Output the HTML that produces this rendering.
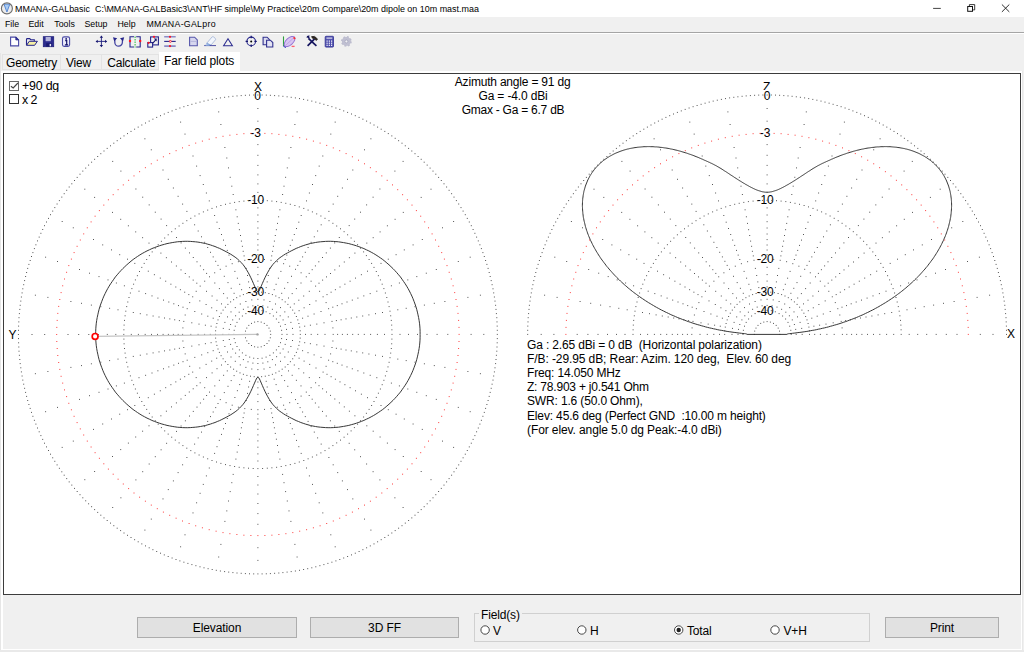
<!DOCTYPE html>
<html><head><meta charset="utf-8"><title>MMANA-GALbasic</title>
<style>
html,body{margin:0;padding:0}
body{width:1024px;height:652px;overflow:hidden;background:#f0f0f0;position:relative;font-family:"Liberation Sans",sans-serif;color:#000;font-size:12px}
.abs{position:absolute;white-space:nowrap}
#title{left:0;top:0;width:1024px;height:17px;background:#fff}
#ttext{left:15px;top:3.1px;font-size:8.95px;line-height:13px;color:#000}
#menu{left:0;top:17px;width:1024px;height:15px;background:#f0f0f0}
#menu span{position:absolute;top:1px;font-size:8.8px;line-height:13px}
#sep1{left:0;top:32px;width:1024px;height:1px;background:#a5a5a5}
#sep2{left:0;top:33px;width:1024px;height:1px;background:#fff}
.tab{top:54.5px;height:17px;font-size:12px;line-height:17px;color:#000;letter-spacing:-0.2px}
#panel{left:3px;top:73px;width:1016px;height:520px;background:#fff;border:1px solid #3c3c3c}
.pt{font-size:12px;line-height:14px;letter-spacing:-0.15px}
.lb{width:40px;text-align:center}
.btn{background:#e1e1e1;border:1px solid #adadad;box-sizing:border-box;text-align:center;font-size:12px;line-height:19px;padding-top:1px;height:21px;top:617px;letter-spacing:-0.1px}
svg{position:absolute;left:0;top:0}
.dk{stroke:#555;stroke-width:1;stroke-linecap:square;fill:none}
.dr{stroke:#ff3a3a;stroke-width:1;stroke-linecap:square;fill:none}
.cv{stroke:#2c2c2c;stroke-width:0.95;fill:none}
</style></head><body>
<div id="title" class="abs"></div>
<div id="ttext" class="abs">MMANA-GALbasic&nbsp; C:\MMANA-GALBasic3\ANT\HF simple\My Practice\20m Compare\20m dipole on 10m mast.maa</div>
<div id="menu" class="abs"><span style="left:5px">File</span><span style="left:28.5px">Edit</span><span style="left:54.3px">Tools</span><span style="left:84.5px">Setup</span><span style="left:117.5px">Help</span><span style="left:146.5px;letter-spacing:0.28px">MMANA-GALpro</span></div>
<div id="sep1" class="abs"></div><div id="sep2" class="abs"></div>

<!-- tabs -->
<div class="abs" style="left:0;top:53px;width:1px;height:599px;background:#e6e6e6"></div><div class="abs" style="left:0;top:650px;width:1024px;height:2px;background:#e9e9e9"></div><div class="abs" style="left:1022px;top:71px;width:1px;height:579px;background:#e8e8e8"></div>
<div class="abs" style="left:1px;top:71px;width:1021px;height:579px;box-sizing:border-box;border:solid #fff;border-width:2px 1px 1.5px 2px"></div>
<div class="abs" style="left:1.5px;top:53.5px;width:157.5px;height:16.5px;border:1px solid #e3e3e3;box-sizing:border-box"></div><div class="abs" style="left:60.3px;top:54px;width:1px;height:16px;background:#e3e3e3"></div><div class="abs" style="left:101px;top:54px;width:1px;height:16px;background:#e3e3e3"></div>
<div class="abs" style="left:158.8px;top:51.8px;width:80.8px;height:19.5px;background:#fff"></div>
<div class="abs tab" style="left:6px">Geometry</div>
<div class="abs tab" style="left:66px">View</div>
<div class="abs tab" style="left:107.2px">Calculate</div>
<div class="abs tab" style="left:164px;top:53.3px;letter-spacing:-0.12px">Far field plots</div>

<div id="panel" class="abs"></div>

<!-- plot labels -->
<div class="abs" style="left:9.1px;top:80.6px;width:8px;height:8.2px;border:0.8px solid #6a6a6a;background:#fff"></div>
<svg width="12" height="12" style="left:9px;top:80px" viewBox="0 0 12 12"><path d="M1.9 6.2L4.2 8L8.9 3" fill="none" stroke="#444" stroke-width="1.1"/></svg>
<div class="abs" style="left:9.1px;top:94.2px;width:8px;height:8.2px;border:0.8px solid #333;background:#fff"></div>
<div class="abs pt" style="left:22px;top:78.9px;height:13.3px;overflow:hidden;letter-spacing:-0.2px;font-size:12.4px">+90 dg</div>
<div class="abs pt" style="left:22px;top:92.6px;letter-spacing:-0.6px;font-size:12.4px">x 2</div>
<div class="abs pt" style="left:254px;top:80px">X</div>
<div class="abs pt" style="left:763px;top:80px">Z</div>
<div class="abs pt" style="left:8.4px;top:327.6px">Y</div>
<div class="abs pt" style="left:1007px;top:327.3px">X</div>
<div class="abs pt" style="left:412.6px;top:75px;width:200px;text-align:center;letter-spacing:-0.2px">Azimuth angle = 91 dg</div>
<div class="abs pt" style="left:413px;top:89px;width:200px;text-align:center">Ga = -4.0 dBi</div>
<div class="abs pt" style="left:413px;top:103.3px;width:200px;text-align:center;letter-spacing:-0.24px">Gmax - Ga = 6.7 dB</div>

<div class="abs pt" style="left:527px;top:337.6px">Ga : 2.65 dBi = 0 dB&nbsp; (Horizontal polarization)</div>
<div class="abs pt" style="left:527px;top:351.8px;letter-spacing:-0.09px">F/B: -29.95 dB; Rear: Azim. 120 deg,&nbsp; Elev. 60 deg</div>
<div class="abs pt" style="left:527px;top:366.0px">Freq: 14.050 MHz</div>
<div class="abs pt" style="left:527px;top:380.2px;letter-spacing:-0.21px">Z: 78.903 + j0.541 Ohm</div>
<div class="abs pt" style="left:527px;top:394.4px">SWR: 1.6 (50.0 Ohm),</div>
<div class="abs pt" style="left:527px;top:408.6px">Elev: 45.6 deg (Perfect GND&nbsp; :10.00 m height)</div>
<div class="abs pt" style="left:527px;top:422.8px;letter-spacing:-0.1px">(For elev. angle 5.0 dg Peak:-4.0 dBi)</div>

<div class="abs" style="left:252.5px;top:90.9px;width:11px;height:1.4px;background:#fff"></div><div class="abs" style="left:761.5px;top:90.3px;width:11px;height:2px;background:#fff"></div>
<div class="abs pt lb" style="left:237.5px;top:88.5px">0</div>
<div class="abs pt lb" style="left:235.5px;top:125.9px">-3</div>
<div class="abs pt lb" style="left:235.7px;top:192.7px">-10</div>
<div class="abs pt lb" style="left:235.7px;top:251.5px">-20</div>
<div class="abs pt lb" style="left:235.7px;top:285.0px">-30</div>
<div class="abs pt lb" style="left:235.7px;top:303.9px">-40</div>
<div class="abs pt lb" style="left:747.0px;top:88.5px">0</div>
<div class="abs pt lb" style="left:745.0px;top:125.9px">-3</div>
<div class="abs pt lb" style="left:745.2px;top:192.7px">-10</div>
<div class="abs pt lb" style="left:745.2px;top:251.5px">-20</div>
<div class="abs pt lb" style="left:745.2px;top:285.0px">-30</div>
<div class="abs pt lb" style="left:745.2px;top:303.9px">-40</div>
<svg width="1024" height="652" viewBox="0 0 1024 652">
<g fill="none" stroke-linejoin="miter">
<!-- title icon -->
<circle cx="6.9" cy="8.4" r="5.2" fill="#ececec"/>
<path d="M4 4.2h5.8L6.9 12z" fill="#a8ccf4" stroke="#5a8ad6" stroke-width="1"/>
<circle cx="6.9" cy="8.4" r="5.5" stroke="#6e6e6e" stroke-width="1.15"/>
<!-- window controls -->
<path d="M933.1 8.4h7.7" stroke="#222" stroke-width="0.85"/>
<path d="M969.4 6.1v-1.5h5.3v5.3h-1.6" stroke="#222" stroke-width="0.9"/>
<rect x="967.7" y="6.5" width="4.8" height="4.8" stroke="#111" stroke-width="1"/>
<path d="M1001.9 4.5l7.4 7.4M1009.3 4.5l-7.4 7.4" stroke="#222" stroke-width="0.95"/>
<!-- new -->
<path d="M10.6 37.1h5.2l2.8 2.8v6h-8z" fill="#fff" stroke="#4a4aa6" stroke-width="1.1"/>
<path d="M15.8 37.1v2.8h2.8z" fill="#3a3a96" stroke="#24248a" stroke-width="0.8"/>
<!-- open -->
<path d="M26.5 45.2v-5.8q0-.8.8-.8h2.4l1 1.1h3.6v1.6" stroke="#24248a" stroke-width="1.1"/>
<path d="M26.6 45.3l2.6-4h8.2l-2.8 4z" fill="#f6f0a4" stroke="#24248a" stroke-width="1"/>
<!-- save -->
<rect x="43.3" y="36.7" width="10.4" height="10" fill="#2c2c8e" stroke="#20207c" stroke-width="0.8"/>
<rect x="45.6" y="37" width="5.2" height="4.2" fill="#b4b4dc"/>
<rect x="46.2" y="43.2" width="5.6" height="3.5" fill="#1a1a70"/>
<rect x="49.6" y="43.9" width="1.5" height="2.4" fill="#e8e8f8"/>
<!-- info -->
<rect x="62.5" y="36.9" width="7.1" height="9.5" rx="1.6" fill="#ececfa" stroke="#4c4ca6" stroke-width="1.1"/>
<path d="M65.2 40.6h1.5v4M64.9 44.8h3.2" stroke="#14146a" stroke-width="1.2"/>
<circle cx="66.2" cy="38.9" r="0.9" fill="#14146a"/>
<!-- move -->
<path d="M96.6 41.4h9.6M101.4 36.6v9.6" stroke="#1c1c7c" stroke-width="0.9"/>
<path d="M101.4 35.6l1.7 2.1h-3.4zM101.4 47.2l1.7-2.1h-3.4zM95.6 41.4l2.1-1.7v3.4zM107.2 41.4l-2.1-1.7v3.4z" fill="#14146e"/>
<!-- rotate -->
<path d="M114.8 39.6v2.6a3.8 4 0 0 0 7.6 0v-2.6" stroke="#4444a2" stroke-width="1.3"/>
<path d="M113 37.2l4.2 1-3 3zM124.2 37.2l-4.2 1 3 3z" fill="#24248a"/>
<!-- brackets -->
<path d="M134 36.8h-4v10.2h4M136.2 36.8h4v10.2h-4" stroke="#24248a" stroke-width="1.1"/>
<path d="M135.1 36.4v11.2" stroke="#38c048" stroke-width="1.1" stroke-dasharray="1.6 0.9"/>
<circle cx="130" cy="41" r="1.2" fill="#ff1020"/><circle cx="140.2" cy="41" r="1.2" fill="#ff1020"/>
<!-- scale -->
<rect x="150.6" y="36.9" width="7.8" height="8" stroke="#24248a" stroke-width="1.1"/>
<rect x="147.8" y="42.6" width="4.8" height="4.5" fill="#f0f0f0" stroke="#24248a" stroke-width="1.1"/>
<path d="M152.6 43.3l3.2-3.4" stroke="#14146e" stroke-width="1.1"/>
<path d="M156.7 38.6v2.9l-2.9-2.9z" fill="#14146e"/>
<circle cx="154" cy="36.8" r="1.1" fill="#ff1020"/><circle cx="148.6" cy="42.8" r="1.1" fill="#ff1020"/>
<!-- lines -->
<path d="M164.2 36.8h11.5M164.2 46.1h11.5" stroke="#8a8ac6" stroke-width="1.6"/>
<path d="M164.2 41.4h11.5" stroke="#24248a" stroke-width="1.1"/>
<circle cx="170" cy="36.8" r="1.1" fill="#ff1020"/><circle cx="170" cy="46.1" r="1.1" fill="#ff1020"/>
<circle cx="170.3" cy="41.4" r="1" fill="#fff" stroke="#ff1020" stroke-width="0.8"/>
<!-- doc -->
<path d="M189.6 37.2h5l2.7 2.7v5.8h-7.7z" fill="#d6d6ee" stroke="#5656aa" stroke-width="1.1"/>
<path d="M190.5 41.4h5.8" stroke="#b0b0d8" stroke-width="0.9"/>
<!-- eraser -->
<path d="M206.6 43.4l5.4-6.4q.7-.7 1.5-.1l1.8 1.5q.7.7.1 1.5l-4.6 5.4z" fill="#f2f6fc" stroke="#a8b8d8" stroke-width="0.9"/><path d="M206.6 43.4l4.2 1.9" stroke="#88a8dc" stroke-width="1.2"/>
<path d="M204.2 45.6h11.8" stroke="#3a3a9a" stroke-width="0.9"/>
<path d="M205.6 45.2h4" stroke="#88a8dc" stroke-width="1.4"/>
<!-- triangle -->
<path d="M228 38.8l4.4 7h-8.8z" stroke="#2e2e90" stroke-width="1.05"/>
<!-- crosshair -->
<circle cx="251.2" cy="41.4" r="4.3" stroke="#24248a" stroke-width="1.1"/>
<path d="M251.2 35.8v2.4M251.2 44.6v2.4M245.6 41.4h2.4M254.4 41.4h2.4" stroke="#14146e" stroke-width="1.2"/>
<circle cx="251.2" cy="41.4" r="1" fill="#000"/>
<!-- copy -->
<path d="M263.1 37.2h4l2.2 2.2v5.4h-6.2z" fill="#dcdcf0" stroke="#30308e" stroke-width="1.1"/>
<path d="M266.6 40.2h3.8l2.4 2.4v4.4h-6.2z" fill="#e4e4f4" stroke="#30308e" stroke-width="1.1"/>
<!-- lobe -->
<path d="M283.5 36.4v9.6" stroke="#30a040" stroke-width="1.1"/>
<path d="M283.5 46l2.4 1.6" stroke="#3040c0" stroke-width="1.1"/>
<ellipse cx="289.6" cy="41.5" rx="6.6" ry="3.4" transform="rotate(-42 289.6 41.5)" fill="#d8c4f2" stroke="#9474d4" stroke-width="1"/>
<path d="M285.5 45.5l8-7.5" stroke="#b49ae0" stroke-width="0.7"/>
<path d="M293.6 37.4l1.5 1.5" stroke="#ff3030" stroke-width="1.6"/>
<path d="M291.6 46.4h3" stroke="#ff6070" stroke-width="1.3"/>
<!-- tools -->
<path d="M308.4 38.4l8 7.4" stroke="#14145e" stroke-width="1.7"/>
<path d="M307 37.6q.2-1.6 1.8-1.6l-.4 1.4 1.4.6" stroke="#14145e" stroke-width="1.2"/>
<path d="M307.6 45.8l7-7" stroke="#14145e" stroke-width="1.7"/>
<path d="M311.6 36.6q3-1.6 6 2.6l-1.6 1.2q-1.4-2.4-3.6-2.2z" fill="#2a2420" stroke="#2a2420" stroke-width="0.8"/>
<!-- calc -->
<rect x="325.2" y="36.3" width="8.3" height="10.8" rx="0.8" fill="#4c4cac" stroke="#3a3a98" stroke-width="0.9"/>
<rect x="326.4" y="37.3" width="5.9" height="1.8" fill="#b4b4dc"/>
<g fill="#fff"><rect x="326.5" y="40.5" width="1.2" height="1.2"/><rect x="328.75" y="40.5" width="1.2" height="1.2"/><rect x="331" y="40.5" width="1.2" height="1.2"/>
<rect x="326.5" y="42.6" width="1.2" height="1.2"/><rect x="328.75" y="42.6" width="1.2" height="1.2"/><rect x="331" y="42.6" width="1.2" height="1.2"/>
<rect x="326.5" y="44.7" width="1.2" height="1.2"/><rect x="328.75" y="44.7" width="1.2" height="1.2"/><rect x="331" y="44.7" width="1.2" height="1.2"/></g>
<!-- gear -->
<circle cx="346.4" cy="41.4" r="4.4" fill="#bcbcce" stroke="#bcbcce" stroke-width="2" stroke-dasharray="1.8 1.65"/>
<circle cx="346.4" cy="41.4" r="3.9" fill="#c0c0d2"/>
<circle cx="346.4" cy="41.4" r="1.5" fill="#f0f0f4" stroke="#a4a4bc" stroke-width="0.8"/>
<!-- radios -->
<circle cx="485.1" cy="630" r="4.2" fill="#fff" stroke="#333" stroke-width="0.9"/>
<circle cx="581.8" cy="630" r="4.2" fill="#fff" stroke="#333" stroke-width="0.9"/>
<circle cx="678.7" cy="630" r="4.2" fill="#fff" stroke="#333" stroke-width="0.9"/>
<circle cx="775.0" cy="630" r="4.2" fill="#fff" stroke="#333" stroke-width="0.9"/>
<circle cx="678.7" cy="630" r="2.2" fill="#222"/>
</g>
<path class="dk" d="M257.9 95.0h0M262.1 95.0h0M266.3 95.1h0M270.4 95.3h0M274.6 95.6h0M278.8 95.9h0M282.9 96.3h0M287.1 96.8h0M291.2 97.3h0M295.4 97.9h0M299.5 98.6h0M303.6 99.4h0M307.7 100.2h0M311.8 101.1h0M315.8 102.1h0M319.9 103.2h0M323.9 104.3h0M327.9 105.5h0M331.9 106.7h0M335.9 108.0h0M339.8 109.4h0M343.7 110.9h0M347.6 112.4h0M351.5 114.0h0M355.3 115.7h0M359.1 117.4h0M362.9 119.2h0M366.6 121.1h0M370.3 123.0h0M374.0 125.0h0M377.6 127.1h0M381.2 129.2h0M384.8 131.4h0M388.3 133.6h0M391.8 135.9h0M395.2 138.3h0M398.6 140.7h0M402.0 143.2h0M405.3 145.8h0M408.6 148.4h0M411.8 151.0h0M415.0 153.7h0M418.1 156.5h0M421.2 159.3h0M424.2 162.2h0M427.2 165.1h0M430.1 168.1h0M433.0 171.1h0M435.8 174.2h0M438.6 177.4h0M441.3 180.5h0M444.0 183.8h0M446.6 187.0h0M449.1 190.3h0M451.6 193.7h0M454.0 197.1h0M456.4 200.6h0M458.7 204.0h0M461.0 207.6h0M463.1 211.1h0M465.3 214.7h0M467.3 218.4h0M469.3 222.0h0M471.3 225.7h0M473.1 229.5h0M474.9 233.3h0M476.6 237.1h0M478.3 240.9h0M479.9 244.8h0M481.4 248.6h0M482.9 252.6h0M484.3 256.5h0M485.6 260.5h0M486.9 264.4h0M488.1 268.4h0M489.2 272.5h0M490.2 276.5h0M491.2 280.6h0M492.1 284.7h0M493.0 288.8h0M493.7 292.9h0M494.4 297.0h0M495.0 301.1h0M495.6 305.3h0M496.0 309.4h0M496.4 313.6h0M496.8 317.7h0M497.0 321.9h0M497.2 326.1h0M497.3 330.3h0M497.3 334.4h0M497.3 338.6h0M497.2 342.8h0M497.0 347.0h0M496.8 351.2h0M496.4 355.3h0M496.0 359.5h0M495.6 363.6h0M495.0 367.8h0M494.4 371.9h0M493.7 376.0h0M493.0 380.1h0M492.1 384.2h0M491.2 388.3h0M490.2 392.4h0M489.2 396.4h0M488.1 400.5h0M486.9 404.5h0M485.6 408.4h0M484.3 412.4h0M482.9 416.3h0M481.4 420.3h0M479.9 424.1h0M478.3 428.0h0M476.6 431.8h0M474.9 435.6h0M473.1 439.4h0M471.3 443.2h0M469.3 446.9h0M467.3 450.5h0M465.3 454.2h0M463.1 457.8h0M461.0 461.3h0M458.7 464.9h0M456.4 468.3h0M454.0 471.8h0M451.6 475.2h0M449.1 478.6h0M446.6 481.9h0M444.0 485.1h0M441.3 488.4h0M438.6 491.5h0M435.8 494.7h0M433.0 497.8h0M430.1 500.8h0M427.2 503.8h0M424.2 506.7h0M421.2 509.6h0M418.1 512.4h0M415.0 515.2h0M411.8 517.9h0M408.6 520.5h0M405.3 523.1h0M402.0 525.7h0M398.6 528.2h0M395.2 530.6h0M391.8 533.0h0M388.3 535.3h0M384.8 537.5h0M381.2 539.7h0M377.6 541.8h0M374.0 543.9h0M370.3 545.9h0M366.6 547.8h0M362.9 549.7h0M359.1 551.5h0M355.3 553.2h0M351.5 554.9h0M347.6 556.5h0M343.7 558.0h0M339.8 559.5h0M335.9 560.9h0M331.9 562.2h0M327.9 563.4h0M323.9 564.6h0M319.9 565.7h0M315.8 566.8h0M311.8 567.8h0M307.7 568.7h0M303.6 569.5h0M299.5 570.3h0M295.4 571.0h0M291.2 571.6h0M287.1 572.1h0M282.9 572.6h0M278.8 573.0h0M274.6 573.3h0M270.4 573.6h0M266.3 573.8h0M262.1 573.9h0M257.9 573.9h0M253.7 573.9h0M249.5 573.8h0M245.4 573.6h0M241.2 573.3h0M237.0 573.0h0M232.9 572.6h0M228.7 572.1h0M224.6 571.6h0M220.4 571.0h0M216.3 570.3h0M212.2 569.5h0M208.1 568.7h0M204.0 567.8h0M200.0 566.8h0M195.9 565.7h0M191.9 564.6h0M187.9 563.4h0M183.9 562.2h0M179.9 560.9h0M176.0 559.5h0M172.1 558.0h0M168.2 556.5h0M164.3 554.9h0M160.5 553.2h0M156.7 551.5h0M152.9 549.7h0M149.2 547.8h0M145.5 545.9h0M141.8 543.9h0M138.2 541.8h0M134.6 539.7h0M131.0 537.5h0M127.5 535.3h0M124.0 533.0h0M120.6 530.6h0M117.2 528.2h0M113.8 525.7h0M110.5 523.1h0M107.2 520.5h0M104.0 517.9h0M100.8 515.2h0M97.7 512.4h0M94.6 509.6h0M91.6 506.7h0M88.6 503.8h0M85.7 500.8h0M82.8 497.8h0M80.0 494.7h0M77.2 491.5h0M74.5 488.4h0M71.8 485.1h0M69.2 481.9h0M66.7 478.6h0M64.2 475.2h0M61.8 471.8h0M59.4 468.3h0M57.1 464.9h0M54.8 461.3h0M52.7 457.8h0M50.5 454.2h0M48.5 450.5h0M46.5 446.9h0M44.5 443.2h0M42.7 439.4h0M40.9 435.6h0M39.2 431.8h0M37.5 428.0h0M35.9 424.1h0M34.4 420.3h0M32.9 416.3h0M31.5 412.4h0M30.2 408.4h0M28.9 404.5h0M27.7 400.5h0M26.6 396.4h0M25.6 392.4h0M24.6 388.3h0M23.7 384.2h0M22.8 380.1h0M22.1 376.0h0M21.4 371.9h0M20.8 367.8h0M20.2 363.6h0M19.8 359.5h0M19.4 355.3h0M19.0 351.2h0M18.8 347.0h0M18.6 342.8h0M18.5 338.6h0M18.4 334.5h0M18.5 330.3h0M18.6 326.1h0M18.8 321.9h0M19.0 317.7h0M19.4 313.6h0M19.8 309.4h0M20.2 305.3h0M20.8 301.1h0M21.4 297.0h0M22.1 292.9h0M22.8 288.8h0M23.7 284.7h0M24.6 280.6h0M25.6 276.5h0M26.6 272.5h0M27.7 268.4h0M28.9 264.4h0M30.2 260.5h0M31.5 256.5h0M32.9 252.6h0M34.4 248.6h0M35.9 244.8h0M37.5 240.9h0M39.2 237.1h0M40.9 233.3h0M42.7 229.5h0M44.5 225.7h0M46.5 222.0h0M48.5 218.4h0M50.5 214.7h0M52.7 211.1h0M54.8 207.6h0M57.1 204.0h0M59.4 200.6h0M61.8 197.1h0M64.2 193.7h0M66.7 190.3h0M69.2 187.0h0M71.8 183.8h0M74.5 180.5h0M77.2 177.4h0M80.0 174.2h0M82.8 171.1h0M85.7 168.1h0M88.6 165.1h0M91.6 162.2h0M94.6 159.3h0M97.7 156.5h0M100.8 153.7h0M104.0 151.0h0M107.2 148.4h0M110.5 145.8h0M113.8 143.2h0M117.2 140.7h0M120.6 138.3h0M124.0 135.9h0M127.5 133.6h0M131.0 131.4h0M134.6 129.2h0M138.2 127.1h0M141.8 125.0h0M145.5 123.0h0M149.2 121.1h0M152.9 119.2h0M156.7 117.4h0M160.5 115.7h0M164.3 114.0h0M168.2 112.4h0M172.1 110.9h0M176.0 109.4h0M179.9 108.0h0M183.9 106.7h0M187.9 105.5h0M191.9 104.3h0M195.9 103.2h0M200.0 102.1h0M204.0 101.1h0M208.1 100.2h0M212.2 99.4h0M216.3 98.6h0M220.4 97.9h0M224.6 97.3h0M228.7 96.8h0M232.9 96.3h0M237.0 95.9h0M241.2 95.6h0M245.4 95.3h0M249.5 95.1h0M253.7 95.0h0M257.9 200.3h0M262.6 200.4h0M267.3 200.7h0M271.9 201.1h0M276.6 201.6h0M281.2 202.4h0M285.8 203.3h0M290.3 204.3h0M294.9 205.5h0M299.3 206.9h0M303.8 208.4h0M308.1 210.1h0M312.4 211.9h0M316.7 213.9h0M320.9 216.0h0M325.0 218.3h0M329.0 220.7h0M332.9 223.3h0M336.7 226.0h0M340.5 228.8h0M344.1 231.7h0M347.6 234.8h0M351.1 238.0h0M354.4 241.3h0M357.6 244.7h0M360.6 248.2h0M363.6 251.9h0M366.4 255.6h0M369.1 259.5h0M371.6 263.4h0M374.0 267.4h0M376.3 271.5h0M378.4 275.7h0M380.4 279.9h0M382.2 284.2h0M383.9 288.6h0M385.4 293.0h0M386.8 297.5h0M388.0 302.0h0M389.1 306.6h0M390.0 311.2h0M390.7 315.8h0M391.3 320.4h0M391.7 325.1h0M391.9 329.8h0M392.0 334.4h0M391.9 339.1h0M391.7 343.8h0M391.3 348.5h0M390.7 353.1h0M390.0 357.7h0M389.1 362.3h0M388.0 366.9h0M386.8 371.4h0M385.4 375.9h0M383.9 380.3h0M382.2 384.7h0M380.4 389.0h0M378.4 393.2h0M376.3 397.4h0M374.0 401.5h0M371.6 405.5h0M369.1 409.4h0M366.4 413.3h0M363.6 417.0h0M360.6 420.7h0M357.6 424.2h0M354.4 427.6h0M351.1 430.9h0M347.6 434.1h0M344.1 437.2h0M340.5 440.1h0M336.7 442.9h0M332.9 445.6h0M329.0 448.2h0M325.0 450.6h0M320.9 452.9h0M316.7 455.0h0M312.4 457.0h0M308.1 458.8h0M303.8 460.5h0M299.3 462.0h0M294.9 463.4h0M290.3 464.6h0M285.8 465.6h0M281.2 466.5h0M276.6 467.3h0M271.9 467.8h0M267.3 468.2h0M262.6 468.5h0M257.9 468.6h0M253.2 468.5h0M248.5 468.2h0M243.9 467.8h0M239.2 467.3h0M234.6 466.5h0M230.0 465.6h0M225.5 464.6h0M220.9 463.4h0M216.5 462.0h0M212.0 460.5h0M207.7 458.8h0M203.4 457.0h0M199.1 455.0h0M194.9 452.9h0M190.8 450.6h0M186.8 448.2h0M182.9 445.6h0M179.1 442.9h0M175.3 440.1h0M171.7 437.2h0M168.2 434.1h0M164.7 430.9h0M161.4 427.6h0M158.2 424.2h0M155.2 420.7h0M152.2 417.0h0M149.4 413.3h0M146.7 409.4h0M144.2 405.5h0M141.8 401.5h0M139.5 397.4h0M137.4 393.2h0M135.4 389.0h0M133.6 384.7h0M131.9 380.3h0M130.4 375.9h0M129.0 371.4h0M127.8 366.9h0M126.7 362.3h0M125.8 357.7h0M125.1 353.1h0M124.5 348.5h0M124.1 343.8h0M123.9 339.1h0M123.8 334.4h0M123.9 329.8h0M124.1 325.1h0M124.5 320.4h0M125.1 315.8h0M125.8 311.2h0M126.7 306.6h0M127.8 302.0h0M129.0 297.5h0M130.4 293.0h0M131.9 288.6h0M133.6 284.2h0M135.4 279.9h0M137.4 275.7h0M139.5 271.5h0M141.8 267.4h0M144.2 263.4h0M146.7 259.5h0M149.4 255.6h0M152.2 251.9h0M155.2 248.2h0M158.2 244.7h0M161.4 241.3h0M164.7 238.0h0M168.2 234.8h0M171.7 231.7h0M175.3 228.8h0M179.1 226.0h0M182.9 223.3h0M186.8 220.7h0M190.8 218.3h0M194.9 216.0h0M199.1 213.9h0M203.4 211.9h0M207.7 210.1h0M212.0 208.4h0M216.5 206.9h0M220.9 205.5h0M225.5 204.3h0M230.0 203.3h0M234.6 202.4h0M239.2 201.6h0M243.9 201.1h0M248.5 200.7h0M253.2 200.4h0M257.9 259.2h0M264.5 259.5h0M271.0 260.3h0M277.4 261.7h0M283.6 263.7h0M289.7 266.2h0M295.5 269.3h0M301.1 272.8h0M306.3 276.8h0M311.1 281.2h0M315.6 286.1h0M319.6 291.3h0M323.1 296.8h0M326.1 302.6h0M328.6 308.7h0M330.6 315.0h0M332.0 321.4h0M332.9 327.9h0M333.2 334.4h0M332.9 341.0h0M332.0 347.5h0M330.6 353.9h0M328.6 360.2h0M326.1 366.3h0M323.1 372.1h0M319.6 377.6h0M315.6 382.8h0M311.1 387.7h0M306.3 392.1h0M301.1 396.1h0M295.5 399.6h0M289.7 402.7h0M283.6 405.2h0M277.4 407.2h0M271.0 408.6h0M264.5 409.4h0M257.9 409.7h0M251.3 409.4h0M244.8 408.6h0M238.4 407.2h0M232.2 405.2h0M226.1 402.7h0M220.3 399.6h0M214.7 396.1h0M209.5 392.1h0M204.7 387.7h0M200.2 382.8h0M196.2 377.6h0M192.7 372.1h0M189.7 366.3h0M187.2 360.2h0M185.2 353.9h0M183.8 347.5h0M182.9 341.0h0M182.6 334.4h0M182.9 327.9h0M183.8 321.4h0M185.2 315.0h0M187.2 308.7h0M189.7 302.6h0M192.7 296.8h0M196.2 291.3h0M200.2 286.1h0M204.7 281.2h0M209.5 276.8h0M214.7 272.8h0M220.3 269.3h0M226.1 266.2h0M232.2 263.7h0M238.4 261.7h0M244.8 260.3h0M251.3 259.5h0M257.9 292.0h0M261.6 292.2h0M265.3 292.7h0M268.9 293.5h0M272.4 294.6h0M275.8 296.0h0M279.1 297.7h0M282.2 299.7h0M285.2 301.9h0M287.9 304.4h0M290.4 307.2h0M292.7 310.1h0M294.7 313.2h0M296.4 316.5h0M297.8 319.9h0M298.9 323.5h0M299.7 327.1h0M300.2 330.8h0M300.3 334.4h0M300.2 338.1h0M299.7 341.8h0M298.9 345.4h0M297.8 349.0h0M296.4 352.4h0M294.7 355.7h0M292.7 358.8h0M290.4 361.7h0M287.9 364.5h0M285.2 367.0h0M282.2 369.2h0M279.1 371.2h0M275.8 372.9h0M272.4 374.3h0M268.9 375.4h0M265.3 376.2h0M261.6 376.7h0M257.9 376.9h0M254.2 376.7h0M250.5 376.2h0M246.9 375.4h0M243.4 374.3h0M240.0 372.9h0M236.7 371.2h0M233.6 369.2h0M230.6 367.0h0M227.9 364.5h0M225.4 361.7h0M223.1 358.8h0M221.1 355.7h0M219.4 352.4h0M218.0 349.0h0M216.9 345.4h0M216.1 341.8h0M215.6 338.1h0M215.5 334.4h0M215.6 330.8h0M216.1 327.1h0M216.9 323.5h0M218.0 319.9h0M219.4 316.5h0M221.1 313.2h0M223.1 310.1h0M225.4 307.2h0M227.9 304.4h0M230.6 301.9h0M233.6 299.7h0M236.7 297.7h0M240.0 296.0h0M243.4 294.6h0M246.9 293.5h0M250.5 292.7h0M254.2 292.2h0M257.9 310.4h0M262.1 310.7h0M266.1 311.8h0M269.9 313.6h0M273.4 316.0h0M276.4 319.0h0M278.8 322.4h0M280.5 326.2h0M281.6 330.3h0M282.0 334.4h0M281.6 338.6h0M280.5 342.7h0M278.8 346.5h0M276.4 349.9h0M273.4 352.9h0M269.9 355.3h0M266.1 357.1h0M262.1 358.2h0M257.9 358.5h0M253.7 358.2h0M249.7 357.1h0M245.9 355.3h0M242.4 352.9h0M239.4 349.9h0M237.0 346.5h0M235.3 342.7h0M234.2 338.6h0M233.8 334.4h0M234.2 330.3h0M235.3 326.2h0M237.0 322.4h0M239.4 319.0h0M242.4 316.0h0M245.9 313.6h0M249.7 311.8h0M253.7 310.7h0M257.9 321.6h0M261.2 322.1h0M264.3 323.4h0M267.0 325.4h0M269.0 328.1h0M270.3 331.1h0M270.7 334.4h0M270.3 337.8h0M269.0 340.8h0M267.0 343.5h0M264.3 345.5h0M261.2 346.8h0M257.9 347.2h0M254.6 346.8h0M251.5 345.5h0M248.8 343.5h0M246.8 340.9h0M245.5 337.8h0M245.1 334.4h0M245.5 331.1h0M246.8 328.1h0M248.8 325.4h0M251.5 323.4h0M254.6 322.1h0M257.9 108.5h0M257.9 121.2h0M257.9 144.6h0M257.9 155.3h0M257.9 165.4h0M257.9 174.9h0M257.9 183.9h0M257.9 192.4h0M257.9 207.9h0M257.9 215.0h0M257.9 221.7h0M257.9 228.0h0M257.9 234.0h0M257.9 239.6h0M257.9 245.0h0M257.9 250.0h0M257.9 254.7h0M257.9 267.3h0M257.9 274.6h0M257.9 281.1h0M257.9 286.9h0M257.9 299.3h0M257.9 305.4h0M297.1 111.9h0M294.9 124.5h0M290.9 147.5h0M289.0 158.0h0M287.3 167.9h0M285.6 177.3h0M284.0 186.2h0M282.6 194.5h0M279.9 209.8h0M278.6 216.8h0M277.5 223.4h0M276.4 229.7h0M275.3 235.5h0M274.4 241.1h0M273.4 246.3h0M272.6 251.3h0M271.7 255.9h0M269.6 268.4h0M268.3 275.5h0M267.2 281.9h0M266.2 287.6h0M264.0 299.9h0M262.9 305.8h0M335.2 122.1h0M330.8 134.1h0M322.8 156.0h0M319.2 166.1h0M315.7 175.6h0M312.5 184.5h0M309.4 193.0h0M306.5 200.9h0M301.2 215.5h0M298.8 222.2h0M296.5 228.5h0M294.3 234.5h0M292.3 240.1h0M290.3 245.4h0M288.5 250.4h0M286.8 255.1h0M285.2 259.5h0M280.9 271.4h0M278.4 278.2h0M276.1 284.3h0M274.2 289.7h0M269.9 301.5h0M267.8 307.1h0M370.9 138.8h0M364.5 149.8h0M352.8 170.0h0M347.5 179.3h0M342.4 188.0h0M337.7 196.3h0M333.2 204.1h0M328.9 211.4h0M321.2 224.8h0M317.6 231.0h0M314.3 236.8h0M311.1 242.3h0M308.1 247.5h0M305.3 252.3h0M302.6 256.9h0M300.1 261.3h0M297.8 265.4h0M291.5 276.3h0M287.8 282.6h0M284.6 288.3h0M281.7 293.3h0M275.5 304.0h0M272.4 309.3h0M403.1 161.4h0M394.9 171.1h0M379.9 189.0h0M373.1 197.2h0M366.6 204.9h0M360.5 212.2h0M354.7 219.1h0M349.2 225.6h0M339.3 237.5h0M334.7 242.9h0M330.4 248.1h0M326.3 252.9h0M322.5 257.5h0M318.8 261.8h0M315.4 265.9h0M312.2 269.7h0M309.2 273.4h0M301.0 283.0h0M296.4 288.6h0M292.2 293.6h0M288.5 298.0h0M280.5 307.6h0M276.6 312.2h0M431.0 189.2h0M421.2 197.4h0M403.3 212.4h0M395.1 219.3h0M387.4 225.8h0M380.1 231.9h0M373.2 237.7h0M366.8 243.1h0M354.9 253.1h0M349.4 257.7h0M344.3 262.0h0M339.4 266.0h0M334.8 269.9h0M330.5 273.5h0M326.5 276.9h0M322.6 280.1h0M319.0 283.2h0M309.3 291.3h0M303.7 296.0h0M298.8 300.2h0M294.3 303.9h0M284.8 311.9h0M280.2 315.8h0M453.6 221.5h0M442.5 227.8h0M422.3 239.5h0M413.1 244.9h0M404.3 249.9h0M396.1 254.7h0M388.3 259.2h0M381.0 263.4h0M367.5 271.2h0M361.4 274.7h0M355.5 278.1h0M350.1 281.2h0M344.9 284.2h0M340.0 287.0h0M335.4 289.7h0M331.1 292.2h0M327.0 294.6h0M316.0 300.9h0M309.7 304.5h0M304.1 307.8h0M299.1 310.7h0M288.3 316.9h0M283.1 319.9h0M470.2 257.2h0M458.3 261.5h0M436.3 269.5h0M426.3 273.2h0M416.8 276.6h0M407.8 279.9h0M399.4 283.0h0M391.4 285.8h0M376.8 291.2h0M370.2 293.6h0M363.8 295.9h0M357.9 298.1h0M352.3 300.1h0M347.0 302.0h0M342.0 303.8h0M337.3 305.6h0M332.8 307.2h0M321.0 311.5h0M314.1 314.0h0M308.0 316.2h0M302.6 318.2h0M290.9 322.4h0M285.2 324.5h0M480.4 295.2h0M467.9 297.4h0M444.9 301.5h0M434.3 303.3h0M424.4 305.1h0M415.0 306.7h0M406.2 308.3h0M397.8 309.8h0M382.5 312.5h0M375.5 313.7h0M368.9 314.9h0M362.7 316.0h0M356.8 317.0h0M351.3 318.0h0M346.0 318.9h0M341.1 319.8h0M336.4 320.6h0M324.0 322.8h0M316.8 324.1h0M310.4 325.2h0M304.7 326.2h0M292.5 328.4h0M286.5 329.4h0M483.8 334.4h0M471.1 334.4h0M447.8 334.4h0M437.1 334.4h0M427.0 334.4h0M417.5 334.4h0M408.5 334.4h0M400.0 334.4h0M384.5 334.4h0M377.4 334.4h0M370.6 334.4h0M364.3 334.4h0M358.3 334.4h0M352.7 334.4h0M347.4 334.4h0M342.4 334.4h0M337.6 334.4h0M325.0 334.4h0M317.7 334.4h0M311.2 334.4h0M305.5 334.4h0M293.0 334.4h0M287.0 334.4h0M480.4 373.7h0M467.9 371.5h0M444.9 367.4h0M434.3 365.6h0M424.4 363.8h0M415.0 362.2h0M406.2 360.6h0M397.8 359.1h0M382.5 356.4h0M375.5 355.2h0M368.9 354.0h0M362.7 352.9h0M356.8 351.9h0M351.3 350.9h0M346.0 350.0h0M341.1 349.1h0M336.4 348.3h0M324.0 346.1h0M316.8 344.8h0M310.4 343.7h0M304.7 342.7h0M292.5 340.5h0M286.5 339.5h0M470.2 411.7h0M458.3 407.4h0M436.3 399.4h0M426.3 395.7h0M416.8 392.3h0M407.8 389.0h0M399.4 385.9h0M391.4 383.1h0M376.8 377.7h0M370.2 375.3h0M363.8 373.0h0M357.9 370.8h0M352.3 368.8h0M347.0 366.9h0M342.0 365.1h0M337.3 363.3h0M332.8 361.7h0M321.0 357.4h0M314.1 354.9h0M308.0 352.7h0M302.6 350.7h0M290.9 346.5h0M285.2 344.4h0M453.6 447.4h0M442.5 441.1h0M422.3 429.4h0M413.1 424.0h0M404.3 419.0h0M396.1 414.2h0M388.3 409.7h0M381.0 405.5h0M367.5 397.7h0M361.4 394.2h0M355.5 390.8h0M350.1 387.7h0M344.9 384.7h0M340.0 381.9h0M335.4 379.2h0M331.1 376.7h0M327.0 374.3h0M316.0 368.0h0M309.7 364.4h0M304.1 361.1h0M299.1 358.2h0M288.3 352.0h0M283.1 349.0h0M431.0 479.7h0M421.2 471.5h0M403.3 456.5h0M395.1 449.6h0M387.4 443.1h0M380.1 437.0h0M373.2 431.2h0M366.8 425.8h0M354.9 415.8h0M349.4 411.2h0M344.3 406.9h0M339.4 402.9h0M334.8 399.0h0M330.5 395.4h0M326.5 392.0h0M322.6 388.8h0M319.0 385.7h0M309.3 377.6h0M303.7 372.9h0M298.8 368.7h0M294.3 365.0h0M284.8 357.0h0M280.2 353.1h0M403.1 507.5h0M394.9 497.8h0M379.9 479.9h0M373.1 471.7h0M366.6 464.0h0M360.5 456.7h0M354.7 449.8h0M349.2 443.3h0M339.3 431.4h0M334.7 426.0h0M330.4 420.8h0M326.3 416.0h0M322.5 411.4h0M318.8 407.1h0M315.4 403.0h0M312.2 399.2h0M309.2 395.5h0M301.0 385.9h0M296.4 380.3h0M292.2 375.3h0M288.5 370.9h0M280.5 361.3h0M276.6 356.7h0M370.9 530.1h0M364.5 519.1h0M352.8 498.9h0M347.5 489.6h0M342.4 480.9h0M337.7 472.6h0M333.2 464.8h0M328.9 457.5h0M321.2 444.1h0M317.6 437.9h0M314.3 432.1h0M311.1 426.6h0M308.1 421.4h0M305.3 416.6h0M302.6 412.0h0M300.1 407.6h0M297.8 403.5h0M291.5 392.6h0M287.8 386.3h0M284.6 380.6h0M281.7 375.6h0M275.5 364.9h0M272.4 359.6h0M335.2 546.8h0M330.8 534.8h0M322.8 512.9h0M319.2 502.8h0M315.7 493.3h0M312.5 484.4h0M309.4 475.9h0M306.5 468.0h0M301.2 453.4h0M298.8 446.7h0M296.5 440.4h0M294.3 434.4h0M292.3 428.8h0M290.3 423.5h0M288.5 418.5h0M286.8 413.8h0M285.2 409.4h0M280.9 397.5h0M278.4 390.7h0M276.1 384.6h0M274.2 379.2h0M269.9 367.4h0M267.8 361.8h0M297.1 557.0h0M294.9 544.4h0M290.9 521.4h0M289.0 510.9h0M287.3 501.0h0M285.6 491.6h0M284.0 482.7h0M282.6 474.4h0M279.9 459.1h0M278.6 452.1h0M277.5 445.5h0M276.4 439.2h0M275.3 433.4h0M274.4 427.8h0M273.4 422.6h0M272.6 417.6h0M271.7 413.0h0M269.6 400.5h0M268.3 393.4h0M267.2 387.0h0M266.2 381.3h0M264.0 369.0h0M262.9 363.1h0M257.9 560.4h0M257.9 547.7h0M257.9 524.3h0M257.9 513.6h0M257.9 503.5h0M257.9 494.0h0M257.9 485.0h0M257.9 476.5h0M257.9 461.0h0M257.9 453.9h0M257.9 447.2h0M257.9 440.9h0M257.9 434.9h0M257.9 429.3h0M257.9 423.9h0M257.9 418.9h0M257.9 414.2h0M257.9 401.6h0M257.9 394.3h0M257.9 387.8h0M257.9 382.0h0M257.9 369.6h0M257.9 363.5h0M218.7 557.0h0M220.9 544.4h0M224.9 521.4h0M226.8 510.9h0M228.5 501.0h0M230.2 491.6h0M231.8 482.7h0M233.2 474.4h0M235.9 459.1h0M237.2 452.1h0M238.3 445.5h0M239.4 439.2h0M240.5 433.4h0M241.4 427.8h0M242.4 422.6h0M243.2 417.6h0M244.1 413.0h0M246.2 400.5h0M247.5 393.4h0M248.6 387.0h0M249.6 381.3h0M251.8 369.0h0M252.9 363.1h0M180.6 546.8h0M185.0 534.8h0M193.0 512.9h0M196.6 502.8h0M200.1 493.3h0M203.3 484.4h0M206.4 475.9h0M209.3 468.0h0M214.6 453.4h0M217.0 446.7h0M219.3 440.4h0M221.5 434.4h0M223.5 428.8h0M225.5 423.5h0M227.3 418.5h0M229.0 413.8h0M230.6 409.4h0M234.9 397.5h0M237.4 390.7h0M239.7 384.6h0M241.6 379.2h0M245.9 367.4h0M248.0 361.8h0M144.9 530.1h0M151.3 519.1h0M163.0 498.9h0M168.3 489.6h0M173.4 480.9h0M178.1 472.6h0M182.6 464.8h0M186.9 457.5h0M194.6 444.1h0M198.2 437.9h0M201.5 432.1h0M204.7 426.6h0M207.7 421.4h0M210.5 416.6h0M213.2 412.0h0M215.7 407.6h0M218.0 403.5h0M224.3 392.6h0M228.0 386.3h0M231.2 380.6h0M234.1 375.6h0M240.3 364.9h0M243.4 359.6h0M112.7 507.5h0M120.9 497.8h0M135.9 479.9h0M142.7 471.7h0M149.2 464.0h0M155.3 456.7h0M161.1 449.8h0M166.6 443.3h0M176.5 431.4h0M181.1 426.0h0M185.4 420.8h0M189.5 416.0h0M193.3 411.4h0M197.0 407.1h0M200.4 403.0h0M203.6 399.2h0M206.6 395.5h0M214.8 385.9h0M219.4 380.3h0M223.6 375.3h0M227.3 370.9h0M235.3 361.3h0M239.2 356.7h0M84.8 479.7h0M94.6 471.5h0M112.5 456.5h0M120.7 449.6h0M128.4 443.1h0M135.7 437.0h0M142.6 431.2h0M149.0 425.8h0M160.9 415.8h0M166.4 411.2h0M171.5 406.9h0M176.4 402.9h0M181.0 399.0h0M185.3 395.4h0M189.3 392.0h0M193.2 388.8h0M196.8 385.7h0M206.5 377.6h0M212.1 372.9h0M217.0 368.7h0M221.5 365.0h0M231.0 357.0h0M235.6 353.1h0M62.2 447.4h0M73.3 441.1h0M93.5 429.4h0M102.7 424.0h0M111.5 419.0h0M119.7 414.2h0M127.5 409.7h0M134.8 405.5h0M148.3 397.7h0M154.4 394.2h0M160.3 390.8h0M165.7 387.7h0M170.9 384.7h0M175.8 381.9h0M180.4 379.2h0M184.7 376.7h0M188.8 374.3h0M199.8 368.0h0M206.1 364.4h0M211.7 361.1h0M216.7 358.2h0M227.5 352.0h0M232.7 349.0h0M45.6 411.7h0M57.5 407.4h0M79.5 399.4h0M89.5 395.7h0M99.0 392.3h0M108.0 389.0h0M116.4 385.9h0M124.4 383.1h0M139.0 377.7h0M145.6 375.3h0M152.0 373.0h0M157.9 370.8h0M163.5 368.8h0M168.8 366.9h0M173.8 365.1h0M178.5 363.3h0M183.0 361.7h0M194.8 357.4h0M201.7 354.9h0M207.8 352.7h0M213.2 350.7h0M224.9 346.5h0M230.6 344.4h0M35.4 373.7h0M47.9 371.5h0M70.9 367.4h0M81.5 365.6h0M91.4 363.8h0M100.8 362.2h0M109.6 360.6h0M118.0 359.1h0M133.3 356.4h0M140.3 355.2h0M146.9 354.0h0M153.1 352.9h0M159.0 351.9h0M164.5 350.9h0M169.8 350.0h0M174.7 349.1h0M179.4 348.3h0M191.8 346.1h0M199.0 344.8h0M205.4 343.7h0M211.1 342.7h0M223.3 340.5h0M229.3 339.5h0M32.0 334.5h0M44.7 334.5h0M68.0 334.5h0M78.7 334.5h0M88.8 334.5h0M98.3 334.5h0M107.3 334.4h0M115.8 334.4h0M131.3 334.4h0M138.4 334.4h0M145.2 334.4h0M151.5 334.4h0M157.5 334.4h0M163.1 334.4h0M168.4 334.4h0M173.4 334.4h0M178.2 334.4h0M190.8 334.4h0M198.1 334.4h0M204.6 334.4h0M210.3 334.4h0M222.8 334.4h0M228.8 334.4h0M35.4 295.2h0M47.9 297.4h0M70.9 301.5h0M81.5 303.3h0M91.4 305.1h0M100.8 306.7h0M109.6 308.3h0M118.0 309.8h0M133.3 312.5h0M140.3 313.7h0M146.9 314.9h0M153.1 316.0h0M159.0 317.0h0M164.5 318.0h0M169.8 318.9h0M174.7 319.8h0M179.4 320.6h0M191.8 322.8h0M199.0 324.1h0M205.4 325.2h0M211.1 326.2h0M223.3 328.4h0M229.3 329.4h0M45.6 257.2h0M57.5 261.5h0M79.5 269.5h0M89.5 273.2h0M99.0 276.6h0M108.0 279.9h0M116.4 283.0h0M124.4 285.8h0M139.0 291.2h0M145.6 293.6h0M152.0 295.9h0M157.9 298.1h0M163.5 300.1h0M168.8 302.0h0M173.8 303.8h0M178.5 305.6h0M183.0 307.2h0M194.8 311.5h0M201.7 314.0h0M207.8 316.2h0M213.2 318.2h0M224.9 322.4h0M230.6 324.5h0M62.2 221.5h0M73.3 227.8h0M93.5 239.5h0M102.7 244.9h0M111.5 249.9h0M119.7 254.7h0M127.5 259.2h0M134.8 263.4h0M148.3 271.2h0M154.4 274.7h0M160.3 278.1h0M165.7 281.2h0M170.9 284.2h0M175.8 287.0h0M180.4 289.7h0M184.7 292.2h0M188.8 294.6h0M199.8 300.9h0M206.1 304.5h0M211.7 307.8h0M216.7 310.7h0M227.5 316.9h0M232.7 319.9h0M84.8 189.2h0M94.6 197.4h0M112.5 212.4h0M120.7 219.3h0M128.4 225.8h0M135.7 231.9h0M142.6 237.7h0M149.0 243.1h0M160.9 253.1h0M166.4 257.7h0M171.5 262.0h0M176.4 266.0h0M181.0 269.9h0M185.3 273.5h0M189.3 276.9h0M193.2 280.1h0M196.8 283.2h0M206.5 291.3h0M212.1 296.0h0M217.0 300.2h0M221.5 303.9h0M231.0 311.9h0M235.6 315.8h0M112.7 161.4h0M120.9 171.1h0M135.9 189.0h0M142.7 197.2h0M149.2 204.9h0M155.3 212.2h0M161.1 219.1h0M166.6 225.6h0M176.5 237.5h0M181.1 242.9h0M185.4 248.1h0M189.5 252.9h0M193.3 257.5h0M197.0 261.8h0M200.4 265.9h0M203.6 269.7h0M206.6 273.4h0M214.8 283.0h0M219.4 288.6h0M223.6 293.6h0M227.3 298.0h0M235.3 307.6h0M239.2 312.2h0M144.9 138.8h0M151.3 149.8h0M163.0 170.0h0M168.3 179.3h0M173.4 188.0h0M178.1 196.3h0M182.6 204.1h0M186.9 211.4h0M194.6 224.8h0M198.2 231.0h0M201.5 236.8h0M204.7 242.3h0M207.7 247.5h0M210.5 252.3h0M213.2 256.9h0M215.7 261.3h0M218.0 265.4h0M224.3 276.3h0M228.0 282.6h0M231.2 288.3h0M234.1 293.3h0M240.3 304.0h0M243.4 309.3h0M180.6 122.1h0M185.0 134.1h0M193.0 156.0h0M196.6 166.1h0M200.1 175.6h0M203.3 184.5h0M206.4 193.0h0M209.3 200.9h0M214.6 215.5h0M217.0 222.2h0M219.3 228.5h0M221.5 234.5h0M223.5 240.1h0M225.5 245.4h0M227.3 250.4h0M229.0 255.1h0M230.6 259.5h0M234.9 271.4h0M237.4 278.2h0M239.7 284.3h0M241.6 289.7h0M245.9 301.5h0M248.0 307.1h0M218.7 111.9h0M220.9 124.5h0M224.9 147.5h0M226.8 158.0h0M228.5 167.9h0M230.2 177.3h0M231.8 186.2h0M233.2 194.5h0M235.9 209.8h0M237.2 216.8h0M238.3 223.4h0M239.4 229.7h0M240.5 235.5h0M241.4 241.1h0M242.4 246.3h0M243.2 251.3h0M244.1 255.9h0M246.2 268.4h0M247.5 275.5h0M248.6 281.9h0M249.6 287.6h0M251.8 299.9h0M252.9 305.8h0"/>
<path class="dr" d="M257.9 133.3h0M264.9 133.4h0M271.9 133.7h0M278.9 134.4h0M285.9 135.2h0M292.8 136.3h0M299.7 137.7h0M306.6 139.2h0M313.4 141.1h0M320.1 143.1h0M326.7 145.4h0M333.3 147.9h0M339.7 150.7h0M346.1 153.6h0M352.4 156.8h0M358.5 160.2h0M364.5 163.8h0M370.4 167.7h0M376.2 171.7h0M381.8 175.9h0M387.2 180.3h0M392.5 184.9h0M397.7 189.7h0M402.6 194.7h0M407.4 199.8h0M412.0 205.1h0M416.4 210.6h0M420.7 216.2h0M424.7 221.9h0M428.5 227.8h0M432.1 233.9h0M435.5 240.0h0M438.7 246.3h0M441.7 252.6h0M444.4 259.1h0M447.0 265.6h0M449.2 272.3h0M451.3 279.0h0M453.1 285.8h0M454.7 292.6h0M456.0 299.5h0M457.1 306.4h0M458.0 313.4h0M458.6 320.4h0M459.0 327.4h0M459.1 334.4h0M459.0 341.5h0M458.6 348.5h0M458.0 355.5h0M457.1 362.5h0M456.0 369.4h0M454.7 376.3h0M453.1 383.1h0M451.3 389.9h0M449.2 396.6h0M447.0 403.3h0M444.4 409.8h0M441.7 416.3h0M438.7 422.6h0M435.5 428.9h0M432.1 435.0h0M428.5 441.1h0M424.7 447.0h0M420.7 452.7h0M416.4 458.3h0M412.0 463.8h0M407.4 469.1h0M402.6 474.2h0M397.7 479.2h0M392.5 484.0h0M387.2 488.6h0M381.8 493.0h0M376.2 497.2h0M370.4 501.2h0M364.5 505.1h0M358.5 508.7h0M352.4 512.1h0M346.1 515.3h0M339.7 518.2h0M333.3 521.0h0M326.7 523.5h0M320.1 525.8h0M313.4 527.8h0M306.6 529.7h0M299.7 531.2h0M292.8 532.6h0M285.9 533.7h0M278.9 534.5h0M271.9 535.2h0M264.9 535.5h0M257.9 535.6h0M250.9 535.5h0M243.9 535.2h0M236.9 534.5h0M229.9 533.7h0M223.0 532.6h0M216.1 531.2h0M209.2 529.7h0M202.4 527.8h0M195.7 525.8h0M189.1 523.5h0M182.5 521.0h0M176.1 518.2h0M169.7 515.3h0M163.4 512.1h0M157.3 508.7h0M151.3 505.1h0M145.4 501.2h0M139.6 497.2h0M134.0 493.0h0M128.6 488.6h0M123.3 484.0h0M118.1 479.2h0M113.2 474.2h0M108.4 469.1h0M103.8 463.8h0M99.4 458.3h0M95.1 452.7h0M91.1 447.0h0M87.3 441.1h0M83.7 435.0h0M80.3 428.9h0M77.1 422.6h0M74.1 416.3h0M71.4 409.8h0M68.8 403.3h0M66.6 396.6h0M64.5 389.9h0M62.7 383.1h0M61.1 376.3h0M59.8 369.4h0M58.7 362.5h0M57.8 355.5h0M57.2 348.5h0M56.8 341.5h0M56.7 334.5h0M56.8 327.4h0M57.2 320.4h0M57.8 313.4h0M58.7 306.4h0M59.8 299.5h0M61.1 292.6h0M62.7 285.8h0M64.5 279.0h0M66.6 272.3h0M68.8 265.6h0M71.4 259.1h0M74.1 252.6h0M77.1 246.3h0M80.3 240.0h0M83.7 233.9h0M87.3 227.8h0M91.1 221.9h0M95.1 216.2h0M99.4 210.6h0M103.8 205.1h0M108.4 199.8h0M113.2 194.7h0M118.1 189.7h0M123.3 184.9h0M128.6 180.3h0M134.0 175.9h0M139.6 171.7h0M145.4 167.7h0M151.3 163.8h0M157.3 160.2h0M163.4 156.8h0M169.7 153.6h0M176.1 150.7h0M182.5 147.9h0M189.1 145.4h0M195.7 143.1h0M202.4 141.1h0M209.2 139.2h0M216.1 137.7h0M223.0 136.3h0M229.9 135.2h0M236.9 134.4h0M243.9 133.7h0M250.9 133.4h0"/>
<path d="M95.1 336.4L257.5 334.4" stroke="#c4c4c4" stroke-width="1.2" fill="none"/><circle cx="257.5" cy="334.4" r="1.2" fill="#a0a0a0"/>
<path class="cv" d="M257.9 291.7 258.7 291.3 259.5 290.0 260.3 288.2 261.3 285.9 262.4 283.4 263.6 280.6 264.9 277.8 266.3 275.0 267.8 272.2 269.4 269.5 271.0 267.0 272.7 264.7 274.5 262.7 276.3 260.9 278.1 259.2 279.9 257.7 281.8 256.4 283.7 255.1 285.6 253.9 287.6 252.8 289.7 251.7 291.8 250.6 294.0 249.5 296.2 248.4 298.5 247.5 300.8 246.5 303.2 245.7 305.5 244.9 308.0 244.2 310.4 243.5 312.9 243.0 315.4 242.5 317.9 242.1 320.4 241.8 323.0 241.6 325.5 241.4 328.1 241.3 330.7 241.3 333.3 241.4 335.9 241.6 338.5 241.8 341.0 242.2 343.6 242.6 346.2 243.1 348.8 243.6 351.3 244.3 353.9 245.0 356.4 245.8 358.9 246.7 361.4 247.6 363.9 248.6 366.4 249.8 368.8 250.9 371.2 252.2 373.6 253.5 375.9 254.9 378.2 256.4 380.4 257.9 382.7 259.5 384.8 261.2 386.9 263.0 389.0 264.8 391.0 266.7 393.0 268.6 394.9 270.6 396.8 272.7 398.6 274.8 400.4 276.9 402.0 279.2 403.6 281.5 405.2 283.8 406.7 286.2 408.1 288.6 409.4 291.0 410.7 293.6 411.9 296.1 413.0 298.7 414.0 301.3 415.0 304.0 415.9 306.6 416.7 309.3 417.4 312.1 418.0 314.8 418.6 317.6 419.1 320.4 419.5 323.2 419.8 326.0 420.0 328.8 420.1 331.7 420.1 334.5 420.1 337.3 420.0 340.2 419.8 343.0 419.5 345.8 419.1 348.6 418.6 351.4 418.0 354.2 417.4 356.9 416.7 359.7 415.9 362.4 415.0 365.0 414.0 367.7 413.0 370.3 411.9 372.9 410.7 375.4 409.4 378.0 408.1 380.4 406.7 382.8 405.2 385.2 403.6 387.5 402.0 389.8 400.4 392.1 398.6 394.2 396.8 396.3 394.9 398.4 393.0 400.4 391.0 402.3 389.0 404.2 386.9 406.0 384.8 407.8 382.7 409.5 380.4 411.1 378.2 412.6 375.9 414.1 373.6 415.5 371.2 416.8 368.8 418.1 366.4 419.2 363.9 420.4 361.4 421.4 358.9 422.3 356.4 423.2 353.9 424.0 351.3 424.7 348.8 425.4 346.2 425.9 343.6 426.4 341.0 426.8 338.5 427.2 335.9 427.4 333.3 427.6 330.7 427.7 328.1 427.7 325.5 427.6 323.0 427.4 320.4 427.2 317.9 426.9 315.4 426.5 312.9 426.0 310.4 425.5 308.0 424.8 305.5 424.1 303.2 423.3 300.8 422.5 298.5 421.5 296.2 420.6 294.0 419.5 291.8 418.4 289.7 417.3 287.6 416.2 285.6 415.1 283.7 413.9 281.8 412.6 279.9 411.3 278.1 409.8 276.3 408.1 274.5 406.3 272.7 404.3 271.0 402.0 269.4 399.5 267.8 396.8 266.3 394.0 264.9 391.2 263.6 388.4 262.4 385.6 261.3 383.1 260.3 380.8 259.5 379.0 258.7 377.7 257.9 377.3 257.1 377.7 256.3 379.0 255.5 380.8 254.5 383.1 253.4 385.6 252.2 388.4 250.9 391.2 249.5 394.0 248.0 396.8 246.4 399.5 244.8 402.0 243.1 404.3 241.3 406.3 239.5 408.1 237.7 409.8 235.9 411.3 234.0 412.6 232.1 413.9 230.2 415.1 228.2 416.2 226.1 417.3 224.0 418.4 221.8 419.5 219.6 420.6 217.3 421.5 215.0 422.5 212.6 423.3 210.3 424.1 207.8 424.8 205.4 425.5 202.9 426.0 200.4 426.5 197.9 426.9 195.4 427.2 192.8 427.4 190.3 427.6 187.7 427.7 185.1 427.7 182.5 427.6 179.9 427.4 177.3 427.2 174.8 426.8 172.2 426.4 169.6 425.9 167.0 425.4 164.5 424.7 161.9 424.0 159.4 423.2 156.9 422.3 154.4 421.4 151.9 420.4 149.4 419.2 147.0 418.1 144.6 416.8 142.2 415.5 139.9 414.1 137.6 412.6 135.4 411.1 133.1 409.5 131.0 407.8 128.9 406.0 126.8 404.2 124.8 402.3 122.8 400.4 120.9 398.4 119.0 396.3 117.2 394.2 115.4 392.1 113.8 389.8 112.2 387.5 110.6 385.2 109.1 382.8 107.7 380.4 106.4 378.0 105.1 375.4 103.9 372.9 102.8 370.3 101.8 367.7 100.8 365.0 99.9 362.4 99.1 359.7 98.4 356.9 97.8 354.2 97.2 351.4 96.7 348.6 96.3 345.8 96.0 343.0 95.8 340.2 95.7 337.3 95.7 334.5 95.7 331.7 95.8 328.8 96.0 326.0 96.3 323.2 96.7 320.4 97.2 317.6 97.8 314.8 98.4 312.1 99.1 309.3 99.9 306.6 100.8 304.0 101.8 301.3 102.8 298.7 103.9 296.1 105.1 293.6 106.4 291.0 107.7 288.6 109.1 286.2 110.6 283.8 112.2 281.5 113.8 279.2 115.4 276.9 117.2 274.8 119.0 272.7 120.9 270.6 122.8 268.6 124.8 266.7 126.8 264.8 128.9 263.0 131.0 261.2 133.1 259.5 135.4 257.9 137.6 256.4 139.9 254.9 142.2 253.5 144.6 252.2 147.0 250.9 149.4 249.8 151.9 248.6 154.4 247.6 156.9 246.7 159.4 245.8 161.9 245.0 164.5 244.3 167.0 243.6 169.6 243.1 172.2 242.6 174.8 242.2 177.3 241.8 179.9 241.6 182.5 241.4 185.1 241.3 187.7 241.3 190.3 241.4 192.8 241.6 195.4 241.8 197.9 242.1 200.4 242.5 202.9 243.0 205.4 243.5 207.8 244.2 210.3 244.9 212.6 245.7 215.0 246.5 217.3 247.5 219.6 248.4 221.8 249.5 224.0 250.6 226.1 251.7 228.2 252.8 230.2 253.9 232.1 255.1 234.0 256.4 235.9 257.7 237.7 259.2 239.5 260.9 241.3 262.7 243.1 264.7 244.8 267.0 246.4 269.5 248.0 272.2 249.5 275.0 250.9 277.8 252.2 280.6 253.4 283.4 254.5 285.9 255.5 288.2 256.3 290.0 257.1 291.3 257.9 291.7Z"/>
<circle cx="95.1" cy="336.4" r="2.9" fill="#fff" stroke="#ff0000" stroke-width="1.7"/>
<path class="dk" d="M527.7 334.4h0M527.7 330.3h0M527.8 326.1h0M528.0 321.9h0M528.2 317.7h0M528.6 313.6h0M529.0 309.4h0M529.4 305.3h0M530.0 301.1h0M530.6 297.0h0M531.3 292.9h0M532.0 288.8h0M532.9 284.7h0M533.8 280.6h0M534.8 276.5h0M535.8 272.5h0M536.9 268.4h0M538.1 264.4h0M539.4 260.5h0M540.7 256.5h0M542.1 252.6h0M543.6 248.6h0M545.1 244.8h0M546.7 240.9h0M548.4 237.1h0M550.1 233.3h0M551.9 229.5h0M553.7 225.7h0M555.7 222.0h0M557.7 218.4h0M559.7 214.7h0M561.9 211.1h0M564.0 207.6h0M566.3 204.0h0M568.6 200.6h0M571.0 197.1h0M573.4 193.7h0M575.9 190.3h0M578.4 187.0h0M581.0 183.8h0M583.7 180.5h0M586.4 177.4h0M589.2 174.2h0M592.0 171.1h0M594.9 168.1h0M597.8 165.1h0M600.8 162.2h0M603.8 159.3h0M606.9 156.5h0M610.0 153.7h0M613.2 151.0h0M616.4 148.4h0M619.7 145.8h0M623.0 143.2h0M626.4 140.7h0M629.8 138.3h0M633.2 135.9h0M636.7 133.6h0M640.2 131.4h0M643.8 129.2h0M647.4 127.1h0M651.0 125.0h0M654.7 123.0h0M658.4 121.1h0M662.1 119.2h0M665.9 117.4h0M669.7 115.7h0M673.5 114.0h0M677.4 112.4h0M681.3 110.9h0M685.2 109.4h0M689.1 108.0h0M693.1 106.7h0M697.1 105.5h0M701.1 104.3h0M705.1 103.2h0M709.2 102.1h0M713.2 101.1h0M717.3 100.2h0M721.4 99.4h0M725.5 98.6h0M729.6 97.9h0M733.8 97.3h0M737.9 96.8h0M742.1 96.3h0M746.2 95.9h0M750.4 95.6h0M754.6 95.3h0M758.7 95.1h0M762.9 95.0h0M767.1 95.0h0M771.3 95.0h0M775.5 95.1h0M779.6 95.3h0M783.8 95.6h0M788.0 95.9h0M792.1 96.3h0M796.3 96.8h0M800.4 97.3h0M804.6 97.9h0M808.7 98.6h0M812.8 99.4h0M816.9 100.2h0M821.0 101.1h0M825.0 102.1h0M829.1 103.2h0M833.1 104.3h0M837.1 105.5h0M841.1 106.7h0M845.1 108.0h0M849.0 109.4h0M852.9 110.9h0M856.8 112.4h0M860.7 114.0h0M864.5 115.7h0M868.3 117.4h0M872.1 119.2h0M875.8 121.1h0M879.5 123.0h0M883.2 125.0h0M886.8 127.1h0M890.4 129.2h0M894.0 131.4h0M897.5 133.6h0M901.0 135.9h0M904.4 138.3h0M907.8 140.7h0M911.2 143.2h0M914.5 145.8h0M917.8 148.4h0M921.0 151.0h0M924.2 153.7h0M927.3 156.5h0M930.4 159.3h0M933.4 162.2h0M936.4 165.1h0M939.3 168.1h0M942.2 171.1h0M945.0 174.2h0M947.8 177.4h0M950.5 180.5h0M953.2 183.8h0M955.8 187.0h0M958.3 190.3h0M960.8 193.7h0M963.2 197.1h0M965.6 200.6h0M967.9 204.0h0M970.2 207.6h0M972.3 211.1h0M974.5 214.7h0M976.5 218.4h0M978.5 222.0h0M980.5 225.7h0M982.3 229.5h0M984.1 233.3h0M985.8 237.1h0M987.5 240.9h0M989.1 244.8h0M990.6 248.6h0M992.1 252.6h0M993.5 256.5h0M994.8 260.5h0M996.1 264.4h0M997.3 268.4h0M998.4 272.5h0M999.4 276.5h0M1000.4 280.6h0M1001.3 284.7h0M1002.2 288.8h0M1002.9 292.9h0M1003.6 297.0h0M1004.2 301.1h0M1004.8 305.3h0M1005.2 309.4h0M1005.6 313.6h0M1006.0 317.7h0M1006.2 321.9h0M1006.4 326.1h0M1006.5 330.3h0M1006.5 334.4h0M633.0 334.4h0M633.1 329.8h0M633.3 325.1h0M633.7 320.4h0M634.3 315.8h0M635.0 311.2h0M635.9 306.6h0M637.0 302.0h0M638.2 297.5h0M639.6 293.0h0M641.1 288.6h0M642.8 284.2h0M644.6 279.9h0M646.6 275.7h0M648.7 271.5h0M651.0 267.4h0M653.4 263.4h0M655.9 259.5h0M658.6 255.6h0M661.4 251.9h0M664.4 248.2h0M667.4 244.7h0M670.6 241.3h0M673.9 238.0h0M677.4 234.8h0M680.9 231.7h0M684.5 228.8h0M688.3 226.0h0M692.1 223.3h0M696.0 220.7h0M700.0 218.3h0M704.1 216.0h0M708.3 213.9h0M712.6 211.9h0M716.9 210.1h0M721.2 208.4h0M725.7 206.9h0M730.1 205.5h0M734.7 204.3h0M739.2 203.3h0M743.8 202.4h0M748.4 201.6h0M753.1 201.1h0M757.7 200.7h0M762.4 200.4h0M767.1 200.3h0M771.8 200.4h0M776.5 200.7h0M781.1 201.1h0M785.8 201.6h0M790.4 202.4h0M795.0 203.3h0M799.5 204.3h0M804.1 205.5h0M808.5 206.9h0M813.0 208.4h0M817.3 210.1h0M821.6 211.9h0M825.9 213.9h0M830.1 216.0h0M834.2 218.3h0M838.2 220.7h0M842.1 223.3h0M845.9 226.0h0M849.7 228.8h0M853.3 231.7h0M856.8 234.8h0M860.3 238.0h0M863.6 241.3h0M866.8 244.7h0M869.8 248.2h0M872.8 251.9h0M875.6 255.6h0M878.3 259.5h0M880.8 263.4h0M883.2 267.4h0M885.5 271.5h0M887.6 275.7h0M889.6 279.9h0M891.4 284.2h0M893.1 288.6h0M894.6 293.0h0M896.0 297.5h0M897.2 302.0h0M898.3 306.6h0M899.2 311.2h0M899.9 315.8h0M900.5 320.4h0M900.9 325.1h0M901.1 329.8h0M901.2 334.4h0M691.8 334.4h0M692.1 327.9h0M693.0 321.4h0M694.4 315.0h0M696.4 308.7h0M698.9 302.6h0M701.9 296.8h0M705.4 291.3h0M709.4 286.1h0M713.9 281.2h0M718.7 276.8h0M723.9 272.8h0M729.5 269.3h0M735.3 266.2h0M741.4 263.7h0M747.6 261.7h0M754.0 260.3h0M760.5 259.5h0M767.1 259.2h0M773.7 259.5h0M780.2 260.3h0M786.6 261.7h0M792.8 263.7h0M798.9 266.2h0M804.7 269.3h0M810.3 272.8h0M815.5 276.8h0M820.3 281.2h0M824.8 286.1h0M828.8 291.3h0M832.3 296.8h0M835.3 302.6h0M837.8 308.7h0M839.8 315.0h0M841.2 321.4h0M842.1 327.9h0M842.4 334.4h0M724.7 334.4h0M724.8 330.8h0M725.3 327.1h0M726.1 323.5h0M727.2 319.9h0M728.6 316.5h0M730.3 313.2h0M732.3 310.1h0M734.6 307.2h0M737.1 304.4h0M739.8 301.9h0M742.8 299.7h0M745.9 297.7h0M749.2 296.0h0M752.6 294.6h0M756.1 293.5h0M759.7 292.7h0M763.4 292.2h0M767.1 292.0h0M770.8 292.2h0M774.5 292.7h0M778.1 293.5h0M781.6 294.6h0M785.0 296.0h0M788.3 297.7h0M791.4 299.7h0M794.4 301.9h0M797.1 304.4h0M799.6 307.2h0M801.9 310.1h0M803.9 313.2h0M805.6 316.5h0M807.0 319.9h0M808.1 323.5h0M808.9 327.1h0M809.4 330.8h0M809.5 334.4h0M743.0 334.4h0M743.4 330.3h0M744.5 326.2h0M746.2 322.4h0M748.6 319.0h0M751.6 316.0h0M755.1 313.6h0M758.9 311.8h0M762.9 310.7h0M767.1 310.4h0M771.3 310.7h0M775.3 311.8h0M779.1 313.6h0M782.6 316.0h0M785.6 319.0h0M788.0 322.4h0M789.7 326.2h0M790.8 330.3h0M791.2 334.4h0M754.3 334.4h0M754.7 331.1h0M756.0 328.1h0M758.0 325.4h0M760.7 323.4h0M763.8 322.1h0M767.1 321.6h0M770.4 322.1h0M773.5 323.4h0M776.2 325.4h0M778.2 328.1h0M779.5 331.1h0M779.9 334.4h0M541.2 334.4h0M553.9 334.4h0M577.2 334.4h0M587.9 334.4h0M598.0 334.4h0M607.5 334.4h0M616.5 334.4h0M625.0 334.4h0M640.5 334.4h0M647.6 334.4h0M654.4 334.4h0M660.7 334.4h0M666.7 334.4h0M672.3 334.4h0M677.6 334.4h0M682.6 334.4h0M687.4 334.4h0M700.0 334.4h0M707.3 334.4h0M713.8 334.4h0M719.5 334.4h0M732.0 334.4h0M738.0 334.4h0M544.6 295.2h0M557.1 297.4h0M580.1 301.5h0M590.7 303.3h0M600.6 305.1h0M610.0 306.7h0M618.8 308.3h0M627.2 309.8h0M642.5 312.5h0M649.5 313.7h0M656.1 314.9h0M662.3 316.0h0M668.2 317.0h0M673.7 318.0h0M679.0 318.9h0M683.9 319.8h0M688.6 320.6h0M701.0 322.8h0M708.2 324.1h0M714.6 325.2h0M720.3 326.2h0M732.5 328.4h0M738.5 329.4h0M554.8 257.2h0M566.7 261.5h0M588.7 269.5h0M598.7 273.2h0M608.2 276.6h0M617.2 279.9h0M625.6 283.0h0M633.6 285.8h0M648.2 291.2h0M654.8 293.6h0M661.2 295.9h0M667.1 298.1h0M672.7 300.1h0M678.0 302.0h0M683.0 303.8h0M687.7 305.6h0M692.2 307.2h0M704.0 311.5h0M710.9 314.0h0M717.0 316.2h0M722.4 318.2h0M734.1 322.4h0M739.8 324.5h0M571.4 221.5h0M582.5 227.8h0M602.7 239.5h0M611.9 244.9h0M620.7 249.9h0M628.9 254.7h0M636.7 259.2h0M644.0 263.4h0M657.5 271.2h0M663.6 274.7h0M669.5 278.1h0M674.9 281.2h0M680.1 284.2h0M685.0 287.0h0M689.6 289.7h0M693.9 292.2h0M698.0 294.6h0M709.0 300.9h0M715.3 304.5h0M720.9 307.8h0M725.9 310.7h0M736.7 316.9h0M741.9 319.9h0M594.0 189.2h0M603.8 197.4h0M621.7 212.4h0M629.9 219.3h0M637.6 225.8h0M644.9 231.9h0M651.8 237.7h0M658.2 243.1h0M670.1 253.1h0M675.6 257.7h0M680.7 262.0h0M685.6 266.0h0M690.2 269.9h0M694.5 273.5h0M698.5 276.9h0M702.4 280.1h0M706.0 283.2h0M715.7 291.3h0M721.3 296.0h0M726.2 300.2h0M730.7 303.9h0M740.2 311.9h0M744.8 315.8h0M621.9 161.4h0M630.1 171.1h0M645.1 189.0h0M651.9 197.2h0M658.4 204.9h0M664.5 212.2h0M670.3 219.1h0M675.8 225.6h0M685.7 237.5h0M690.3 242.9h0M694.6 248.1h0M698.7 252.9h0M702.5 257.5h0M706.2 261.8h0M709.6 265.9h0M712.8 269.7h0M715.8 273.4h0M724.0 283.0h0M728.6 288.6h0M732.8 293.6h0M736.5 298.0h0M744.5 307.6h0M748.4 312.2h0M654.1 138.8h0M660.5 149.8h0M672.2 170.0h0M677.5 179.3h0M682.6 188.0h0M687.3 196.3h0M691.8 204.1h0M696.1 211.4h0M703.8 224.8h0M707.4 231.0h0M710.7 236.8h0M713.9 242.3h0M716.9 247.5h0M719.7 252.3h0M722.4 256.9h0M724.9 261.3h0M727.2 265.4h0M733.5 276.3h0M737.2 282.6h0M740.4 288.3h0M743.3 293.3h0M749.5 304.0h0M752.6 309.3h0M689.8 122.1h0M694.2 134.1h0M702.2 156.0h0M705.8 166.1h0M709.3 175.6h0M712.5 184.5h0M715.6 193.0h0M718.5 200.9h0M723.8 215.5h0M726.2 222.2h0M728.5 228.5h0M730.7 234.5h0M732.7 240.1h0M734.7 245.4h0M736.5 250.4h0M738.2 255.1h0M739.8 259.5h0M744.1 271.4h0M746.6 278.2h0M748.9 284.3h0M750.8 289.7h0M755.1 301.5h0M757.2 307.1h0M727.9 111.9h0M730.1 124.5h0M734.1 147.5h0M736.0 158.0h0M737.7 167.9h0M739.4 177.3h0M741.0 186.2h0M742.4 194.5h0M745.1 209.8h0M746.4 216.8h0M747.5 223.4h0M748.6 229.7h0M749.7 235.5h0M750.6 241.1h0M751.6 246.3h0M752.4 251.3h0M753.3 255.9h0M755.4 268.4h0M756.7 275.5h0M757.8 281.9h0M758.8 287.6h0M761.0 299.9h0M762.1 305.8h0M767.1 108.5h0M767.1 121.2h0M767.1 144.6h0M767.1 155.3h0M767.1 165.4h0M767.1 174.9h0M767.1 183.9h0M767.1 192.4h0M767.1 207.9h0M767.1 215.0h0M767.1 221.7h0M767.1 228.0h0M767.1 234.0h0M767.1 239.6h0M767.1 245.0h0M767.1 250.0h0M767.1 254.7h0M767.1 267.3h0M767.1 274.6h0M767.1 281.1h0M767.1 286.9h0M767.1 299.3h0M767.1 305.4h0M806.3 111.9h0M804.1 124.5h0M800.1 147.5h0M798.2 158.0h0M796.5 167.9h0M794.8 177.3h0M793.2 186.2h0M791.8 194.5h0M789.1 209.8h0M787.8 216.8h0M786.7 223.4h0M785.6 229.7h0M784.5 235.5h0M783.6 241.1h0M782.6 246.3h0M781.8 251.3h0M780.9 255.9h0M778.8 268.4h0M777.5 275.5h0M776.4 281.9h0M775.4 287.6h0M773.2 299.9h0M772.1 305.8h0M844.4 122.1h0M840.0 134.1h0M832.0 156.0h0M828.4 166.1h0M824.9 175.6h0M821.7 184.5h0M818.6 193.0h0M815.7 200.9h0M810.4 215.5h0M808.0 222.2h0M805.7 228.5h0M803.5 234.5h0M801.5 240.1h0M799.5 245.4h0M797.7 250.4h0M796.0 255.1h0M794.4 259.5h0M790.1 271.4h0M787.6 278.2h0M785.3 284.3h0M783.4 289.7h0M779.1 301.5h0M777.0 307.1h0M880.1 138.8h0M873.7 149.8h0M862.0 170.0h0M856.7 179.3h0M851.6 188.0h0M846.9 196.3h0M842.4 204.1h0M838.1 211.4h0M830.4 224.8h0M826.8 231.0h0M823.5 236.8h0M820.3 242.3h0M817.3 247.5h0M814.5 252.3h0M811.8 256.9h0M809.3 261.3h0M807.0 265.4h0M800.7 276.3h0M797.0 282.6h0M793.8 288.3h0M790.9 293.3h0M784.7 304.0h0M781.6 309.3h0M912.3 161.4h0M904.1 171.1h0M889.1 189.0h0M882.3 197.2h0M875.8 204.9h0M869.7 212.2h0M863.9 219.1h0M858.4 225.6h0M848.5 237.5h0M843.9 242.9h0M839.6 248.1h0M835.5 252.9h0M831.7 257.5h0M828.0 261.8h0M824.6 265.9h0M821.4 269.7h0M818.4 273.4h0M810.2 283.0h0M805.6 288.6h0M801.4 293.6h0M797.7 298.0h0M789.7 307.6h0M785.8 312.2h0M940.2 189.2h0M930.4 197.4h0M912.5 212.4h0M904.3 219.3h0M896.6 225.8h0M889.3 231.9h0M882.4 237.7h0M876.0 243.1h0M864.1 253.1h0M858.6 257.7h0M853.5 262.0h0M848.6 266.0h0M844.0 269.9h0M839.7 273.5h0M835.7 276.9h0M831.8 280.1h0M828.2 283.2h0M818.5 291.3h0M812.9 296.0h0M808.0 300.2h0M803.5 303.9h0M794.0 311.9h0M789.4 315.8h0M962.8 221.5h0M951.7 227.8h0M931.5 239.5h0M922.3 244.9h0M913.5 249.9h0M905.3 254.7h0M897.5 259.2h0M890.2 263.4h0M876.7 271.2h0M870.6 274.7h0M864.7 278.1h0M859.3 281.2h0M854.1 284.2h0M849.2 287.0h0M844.6 289.7h0M840.3 292.2h0M836.2 294.6h0M825.2 300.9h0M818.9 304.5h0M813.3 307.8h0M808.3 310.7h0M797.5 316.9h0M792.3 319.9h0M979.4 257.2h0M967.5 261.5h0M945.5 269.5h0M935.5 273.2h0M926.0 276.6h0M917.0 279.9h0M908.6 283.0h0M900.6 285.8h0M886.0 291.2h0M879.4 293.6h0M873.0 295.9h0M867.1 298.1h0M861.5 300.1h0M856.2 302.0h0M851.2 303.8h0M846.5 305.6h0M842.0 307.2h0M830.2 311.5h0M823.3 314.0h0M817.2 316.2h0M811.8 318.2h0M800.1 322.4h0M794.4 324.5h0M989.6 295.2h0M977.1 297.4h0M954.1 301.5h0M943.5 303.3h0M933.6 305.1h0M924.2 306.7h0M915.4 308.3h0M907.0 309.8h0M891.7 312.5h0M884.7 313.7h0M878.1 314.9h0M871.9 316.0h0M866.0 317.0h0M860.5 318.0h0M855.2 318.9h0M850.3 319.8h0M845.6 320.6h0M833.2 322.8h0M826.0 324.1h0M819.6 325.2h0M813.9 326.2h0M801.7 328.4h0M795.7 329.4h0M993.0 334.4h0M980.3 334.4h0M957.0 334.4h0M946.3 334.4h0M936.2 334.4h0M926.7 334.4h0M917.7 334.4h0M909.2 334.4h0M893.7 334.4h0M886.6 334.4h0M879.8 334.4h0M873.5 334.4h0M867.5 334.4h0M861.9 334.4h0M856.6 334.4h0M851.6 334.4h0M846.8 334.4h0M834.2 334.4h0M826.9 334.4h0M820.4 334.4h0M814.7 334.4h0M802.2 334.4h0M796.2 334.4h0"/>
<path class="dr" d="M565.9 334.4h0M566.0 327.4h0M566.4 320.4h0M567.0 313.4h0M567.9 306.4h0M569.0 299.5h0M570.3 292.6h0M571.9 285.8h0M573.7 279.0h0M575.8 272.3h0M578.0 265.6h0M580.6 259.1h0M583.3 252.6h0M586.3 246.3h0M589.5 240.0h0M592.9 233.9h0M596.5 227.8h0M600.3 221.9h0M604.3 216.2h0M608.6 210.6h0M613.0 205.1h0M617.6 199.8h0M622.4 194.7h0M627.3 189.7h0M632.5 184.9h0M637.8 180.3h0M643.2 175.9h0M648.8 171.7h0M654.6 167.7h0M660.5 163.8h0M666.5 160.2h0M672.6 156.8h0M678.9 153.6h0M685.3 150.7h0M691.7 147.9h0M698.3 145.4h0M704.9 143.1h0M711.6 141.1h0M718.4 139.2h0M725.3 137.7h0M732.2 136.3h0M739.1 135.2h0M746.1 134.4h0M753.1 133.7h0M760.1 133.4h0M767.1 133.3h0M774.1 133.4h0M781.1 133.7h0M788.1 134.4h0M795.1 135.2h0M802.0 136.3h0M808.9 137.7h0M815.8 139.2h0M822.6 141.1h0M829.3 143.1h0M835.9 145.4h0M842.5 147.9h0M848.9 150.7h0M855.3 153.6h0M861.6 156.8h0M867.7 160.2h0M873.7 163.8h0M879.6 167.7h0M885.4 171.7h0M891.0 175.9h0M896.4 180.3h0M901.7 184.9h0M906.9 189.7h0M911.8 194.7h0M916.6 199.8h0M921.2 205.1h0M925.6 210.6h0M929.9 216.2h0M933.9 221.9h0M937.7 227.8h0M941.3 233.9h0M944.7 240.0h0M947.9 246.3h0M950.9 252.6h0M953.6 259.1h0M956.2 265.6h0M958.4 272.3h0M960.5 279.0h0M962.3 285.8h0M963.9 292.6h0M965.2 299.5h0M966.3 306.4h0M967.2 313.4h0M967.8 320.4h0M968.2 327.4h0M968.3 334.4h0"/>
<path class="cv" d="M786.9 334.4 786.9 334.3 786.9 334.2 786.9 334.1 787.1 334.0 787.4 334.0 787.9 333.9 788.6 333.7 789.7 333.6 791.0 333.5 792.5 333.3 794.2 333.1 796.0 332.9 797.9 332.6 799.9 332.4 802.0 332.1 804.1 331.8 806.1 331.5 808.2 331.2 810.2 330.8 812.2 330.4 814.3 330.1 816.3 329.7 818.3 329.2 820.4 328.8 822.4 328.3 824.4 327.9 826.4 327.4 828.4 326.9 830.3 326.3 832.3 325.8 834.2 325.2 836.2 324.7 838.1 324.1 840.0 323.5 841.9 322.9 843.8 322.2 845.7 321.6 847.6 320.9 849.4 320.2 851.3 319.5 853.1 318.8 854.9 318.1 856.7 317.4 858.5 316.6 860.3 315.8 862.1 315.1 863.8 314.3 865.6 313.4 867.3 312.6 869.0 311.8 870.7 310.9 872.4 310.1 874.1 309.2 875.7 308.3 877.4 307.4 879.0 306.5 880.6 305.5 882.2 304.6 883.8 303.6 885.4 302.7 886.9 301.7 888.5 300.7 890.0 299.7 891.5 298.7 893.0 297.7 894.5 296.6 896.0 295.6 897.4 294.5 898.8 293.5 900.3 292.4 901.7 291.3 903.1 290.2 904.4 289.1 905.8 288.0 907.1 286.8 908.4 285.7 909.7 284.6 911.0 283.4 912.3 282.2 913.5 281.1 914.7 279.9 916.0 278.7 917.2 277.5 918.3 276.3 919.5 275.1 920.6 273.9 921.7 272.7 922.8 271.4 923.9 270.2 925.0 269.0 926.0 267.7 927.1 266.5 928.1 265.2 929.0 263.9 930.0 262.7 930.9 261.4 931.9 260.1 932.8 258.9 933.7 257.6 934.5 256.3 935.4 255.0 936.2 253.7 937.0 252.4 937.8 251.1 938.5 249.8 939.3 248.5 940.0 247.2 940.7 245.9 941.4 244.6 942.0 243.3 942.6 242.0 943.3 240.7 943.8 239.4 944.4 238.1 945.0 236.8 945.5 235.5 946.0 234.2 946.5 232.9 946.9 231.6 947.4 230.3 947.8 229.0 948.2 227.7 948.6 226.4 948.9 225.1 949.2 223.8 949.5 222.5 949.8 221.3 950.1 220.0 950.3 218.7 950.6 217.5 950.8 216.2 950.9 215.0 951.1 213.7 951.2 212.5 951.3 211.2 951.4 210.0 951.5 208.8 951.5 207.6 951.6 206.4 951.6 205.2 951.6 204.0 951.5 202.8 951.5 201.6 951.4 200.4 951.3 199.3 951.2 198.1 951.0 197.0 950.9 195.8 950.7 194.7 950.5 193.6 950.3 192.5 950.1 191.4 949.8 190.3 949.5 189.2 949.2 188.2 948.9 187.1 948.6 186.1 948.2 185.0 947.8 184.0 947.4 183.0 947.0 182.0 946.6 181.0 946.2 180.0 945.7 179.1 945.2 178.1 944.7 177.2 944.2 176.2 943.7 175.3 943.1 174.4 942.5 173.5 942.0 172.7 941.4 171.8 940.7 171.0 940.1 170.1 939.5 169.3 938.8 168.5 938.1 167.7 937.4 166.9 936.7 166.2 936.0 165.4 935.3 164.7 934.5 163.9 933.7 163.2 933.0 162.5 932.2 161.9 931.4 161.2 930.5 160.5 929.7 159.9 928.9 159.3 928.0 158.7 927.1 158.1 926.3 157.5 925.4 157.0 924.5 156.4 923.6 155.9 922.6 155.4 921.7 154.9 920.8 154.4 919.8 153.9 918.8 153.4 917.9 153.0 916.9 152.6 915.9 152.2 914.9 151.8 913.9 151.4 912.9 151.0 911.8 150.7 910.8 150.3 909.8 150.0 908.7 149.7 907.7 149.4 906.6 149.1 905.5 148.9 904.5 148.6 903.4 148.4 902.3 148.2 901.2 148.0 900.1 147.8 899.0 147.6 897.9 147.5 896.8 147.3 895.7 147.2 894.6 147.1 893.4 147.0 892.3 146.9 891.2 146.8 890.0 146.7 888.9 146.7 887.8 146.7 886.6 146.6 885.5 146.6 884.3 146.6 883.2 146.7 882.0 146.7 880.9 146.7 879.7 146.8 878.6 146.9 877.4 146.9 876.3 147.0 875.1 147.1 874.0 147.3 872.8 147.4 871.6 147.5 870.5 147.7 869.3 147.9 868.2 148.0 867.0 148.2 865.9 148.4 864.7 148.6 863.6 148.9 862.4 149.1 861.3 149.3 860.1 149.6 859.0 149.9 857.9 150.1 856.7 150.4 855.6 150.7 854.5 151.0 853.3 151.3 852.2 151.7 851.1 152.0 850.0 152.3 848.9 152.7 847.7 153.0 846.6 153.4 845.5 153.8 844.4 154.2 843.3 154.5 842.3 154.9 841.2 155.3 840.1 155.7 839.0 156.2 837.9 156.6 836.9 157.0 835.8 157.4 834.8 157.9 833.7 158.3 832.7 158.8 831.6 159.2 830.6 159.7 829.6 160.2 828.5 160.6 827.5 161.1 826.5 161.5 825.5 162.0 824.5 162.4 823.6 162.9 822.6 163.3 821.6 163.8 820.6 164.3 819.7 164.8 818.7 165.3 817.7 165.8 816.8 166.4 815.8 166.9 814.9 167.5 813.9 168.0 813.0 168.6 812.0 169.2 811.1 169.8 810.2 170.4 809.3 171.0 808.4 171.5 807.5 172.1 806.6 172.7 805.7 173.3 804.8 173.9 803.9 174.5 803.1 175.1 802.2 175.6 801.3 176.2 800.5 176.7 799.7 177.3 798.9 177.8 798.0 178.3 797.2 178.9 796.4 179.4 795.6 179.9 794.9 180.4 794.1 180.9 793.3 181.3 792.5 181.8 791.8 182.3 791.0 182.7 790.3 183.2 789.5 183.6 788.8 184.1 788.1 184.5 787.3 184.9 786.6 185.3 785.9 185.7 785.2 186.1 784.5 186.5 783.8 186.9 783.1 187.2 782.4 187.6 781.7 187.9 781.1 188.3 780.4 188.6 779.7 188.9 779.1 189.2 778.4 189.5 777.7 189.8 777.1 190.0 776.4 190.3 775.8 190.5 775.2 190.7 774.5 190.9 773.9 191.1 773.2 191.3 772.6 191.5 772.0 191.6 771.4 191.8 770.7 191.9 770.1 192.0 769.5 192.1 768.9 192.2 768.2 192.2 767.6 192.2 767.0 192.3 766.4 192.2 765.8 192.2 765.1 192.2 764.5 192.1 763.9 192.0 763.3 191.9 762.6 191.8 762.0 191.6 761.4 191.5 760.8 191.3 760.1 191.1 759.5 190.9 758.8 190.7 758.2 190.5 757.6 190.3 756.9 190.0 756.3 189.8 755.6 189.5 754.9 189.2 754.3 188.9 753.6 188.6 752.9 188.3 752.3 187.9 751.6 187.6 750.9 187.2 750.2 186.9 749.5 186.5 748.8 186.1 748.1 185.7 747.4 185.3 746.7 184.9 745.9 184.5 745.2 184.1 744.5 183.6 743.7 183.2 743.0 182.7 742.2 182.3 741.5 181.8 740.7 181.3 739.9 180.9 739.1 180.4 738.4 179.9 737.6 179.4 736.8 178.9 736.0 178.3 735.1 177.8 734.3 177.3 733.5 176.7 732.7 176.2 731.8 175.6 730.9 175.1 730.1 174.5 729.2 173.9 728.3 173.3 727.4 172.7 726.5 172.1 725.6 171.5 724.7 171.0 723.8 170.4 722.9 169.8 722.0 169.2 721.0 168.6 720.1 168.0 719.1 167.5 718.2 166.9 717.2 166.4 716.3 165.8 715.3 165.3 714.3 164.8 713.4 164.3 712.4 163.8 711.4 163.3 710.4 162.9 709.5 162.4 708.5 162.0 707.5 161.5 706.5 161.1 705.5 160.6 704.4 160.2 703.4 159.7 702.4 159.2 701.3 158.8 700.3 158.3 699.2 157.9 698.2 157.4 697.1 157.0 696.1 156.6 695.0 156.2 693.9 155.7 692.8 155.3 691.7 154.9 690.7 154.5 689.6 154.2 688.5 153.8 687.4 153.4 686.3 153.0 685.1 152.7 684.0 152.3 682.9 152.0 681.8 151.7 680.7 151.3 679.5 151.0 678.4 150.7 677.3 150.4 676.1 150.1 675.0 149.9 673.9 149.6 672.7 149.3 671.6 149.1 670.4 148.9 669.3 148.6 668.1 148.4 667.0 148.2 665.8 148.0 664.7 147.9 663.5 147.7 662.4 147.5 661.2 147.4 660.0 147.3 658.9 147.1 657.7 147.0 656.6 146.9 655.4 146.9 654.3 146.8 653.1 146.7 652.0 146.7 650.8 146.7 649.7 146.6 648.5 146.6 647.4 146.6 646.2 146.7 645.1 146.7 644.0 146.7 642.8 146.8 641.7 146.9 640.6 147.0 639.4 147.1 638.3 147.2 637.2 147.3 636.1 147.5 635.0 147.6 633.9 147.8 632.8 148.0 631.7 148.2 630.6 148.4 629.5 148.6 628.5 148.9 627.4 149.1 626.3 149.4 625.3 149.7 624.2 150.0 623.2 150.3 622.2 150.7 621.1 151.0 620.1 151.4 619.1 151.8 618.1 152.2 617.1 152.6 616.1 153.0 615.2 153.4 614.2 153.9 613.2 154.4 612.3 154.9 611.4 155.4 610.4 155.9 609.5 156.4 608.6 157.0 607.7 157.5 606.9 158.1 606.0 158.7 605.1 159.3 604.3 159.9 603.5 160.5 602.6 161.2 601.8 161.9 601.0 162.5 600.3 163.2 599.5 163.9 598.7 164.7 598.0 165.4 597.3 166.2 596.6 166.9 595.9 167.7 595.2 168.5 594.5 169.3 593.9 170.1 593.3 171.0 592.6 171.8 592.0 172.7 591.5 173.5 590.9 174.4 590.3 175.3 589.8 176.2 589.3 177.2 588.8 178.1 588.3 179.1 587.8 180.0 587.4 181.0 587.0 182.0 586.6 183.0 586.2 184.0 585.8 185.0 585.4 186.1 585.1 187.1 584.8 188.2 584.5 189.2 584.2 190.3 583.9 191.4 583.7 192.5 583.5 193.6 583.3 194.7 583.1 195.8 583.0 197.0 582.8 198.1 582.7 199.3 582.6 200.4 582.5 201.6 582.5 202.8 582.4 204.0 582.4 205.2 582.4 206.4 582.5 207.6 582.5 208.8 582.6 210.0 582.7 211.2 582.8 212.5 582.9 213.7 583.1 215.0 583.2 216.2 583.4 217.5 583.7 218.7 583.9 220.0 584.2 221.3 584.5 222.5 584.8 223.8 585.1 225.1 585.4 226.4 585.8 227.7 586.2 229.0 586.6 230.3 587.1 231.6 587.5 232.9 588.0 234.2 588.5 235.5 589.0 236.8 589.6 238.1 590.2 239.4 590.7 240.7 591.4 242.0 592.0 243.3 592.6 244.6 593.3 245.9 594.0 247.2 594.7 248.5 595.5 249.8 596.2 251.1 597.0 252.4 597.8 253.7 598.6 255.0 599.5 256.3 600.3 257.6 601.2 258.9 602.1 260.1 603.1 261.4 604.0 262.7 605.0 263.9 605.9 265.2 606.9 266.5 608.0 267.7 609.0 269.0 610.1 270.2 611.2 271.4 612.3 272.7 613.4 273.9 614.5 275.1 615.7 276.3 616.8 277.5 618.0 278.7 619.3 279.9 620.5 281.1 621.7 282.2 623.0 283.4 624.3 284.6 625.6 285.7 626.9 286.8 628.2 288.0 629.6 289.1 630.9 290.2 632.3 291.3 633.7 292.4 635.2 293.5 636.6 294.5 638.0 295.6 639.5 296.6 641.0 297.7 642.5 298.7 644.0 299.7 645.5 300.7 647.1 301.7 648.6 302.7 650.2 303.6 651.8 304.6 653.4 305.5 655.0 306.5 656.6 307.4 658.3 308.3 659.9 309.2 661.6 310.1 663.3 310.9 665.0 311.8 666.7 312.6 668.4 313.4 670.2 314.3 671.9 315.1 673.7 315.8 675.5 316.6 677.3 317.4 679.1 318.1 680.9 318.8 682.7 319.5 684.6 320.2 686.4 320.9 688.3 321.6 690.2 322.2 692.1 322.9 694.0 323.5 695.9 324.1 697.8 324.7 699.8 325.2 701.7 325.8 703.7 326.3 705.6 326.9 707.6 327.4 709.6 327.9 711.6 328.3 713.6 328.8 715.7 329.2 717.7 329.7 719.7 330.1 721.8 330.4 723.8 330.8 725.8 331.2 727.9 331.5 729.9 331.8 732.0 332.1 734.1 332.4 736.1 332.6 738.0 332.9 739.8 333.1 741.5 333.3 743.0 333.5 744.3 333.6 745.4 333.7 746.1 333.9 746.6 334.0 746.9 334.0 747.1 334.1 747.1 334.2 747.1 334.3 747.1 334.4Z"/>

</svg>

<!-- bottom -->
<div class="abs btn" style="left:137px;width:160px">Elevation</div>
<div class="abs btn" style="left:310px;width:149px">3D FF</div>
<div class="abs btn" style="left:885px;width:114px">Print</div>
<div class="abs" style="left:474px;top:613px;width:395.5px;height:28.8px;border:1px solid #d0d0d0;box-sizing:border-box"></div>
<div class="abs pt" style="left:479px;top:607.5px;background:#f0f0f0;padding:0 2px">Field(s)</div>
<div class="abs pt" style="left:493px;top:623.5px">V</div>
<div class="abs pt" style="left:590px;top:623.5px">H</div>
<div class="abs pt" style="left:687px;top:623.5px">Total</div>
<div class="abs pt" style="left:783.5px;top:623.5px">V+H</div>
</body></html>
